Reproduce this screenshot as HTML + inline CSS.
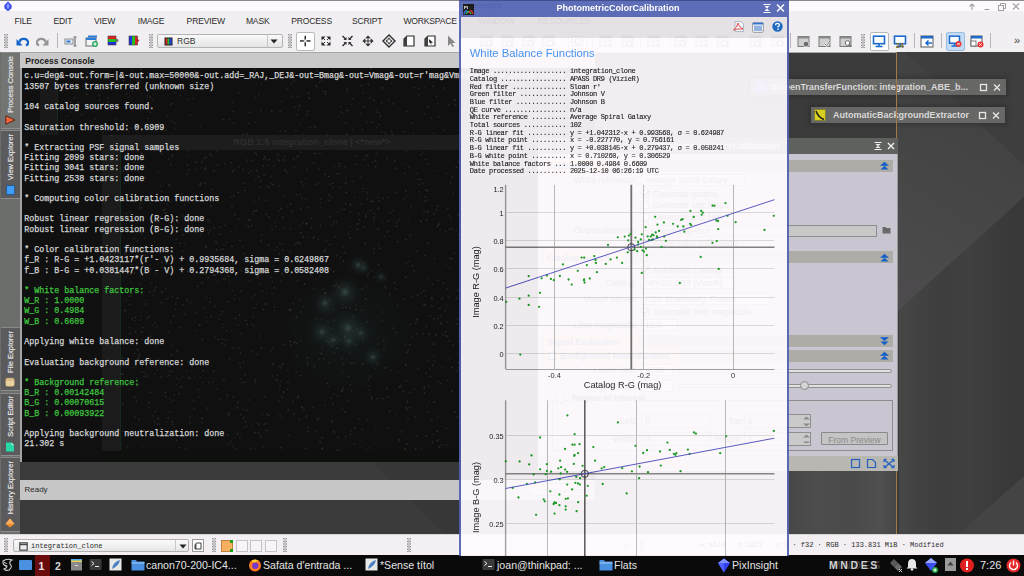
<!DOCTYPE html>
<html><head><meta charset="utf-8">
<style>
*{margin:0;padding:0;box-sizing:border-box}
html,body{width:1024px;height:576px;overflow:hidden;background:#3b3b3b;font-family:"Liberation Sans",sans-serif}
.a{position:absolute}
.mono{font-family:"Liberation Mono",monospace}
.nw{white-space:pre}
#titlebar{left:0;top:0;width:1024px;height:11px;background:#fdf9fd;border-top:1px solid #8a8a8a}
#menubar{left:0;top:11px;width:1024px;height:41px;background:#f1eff1}
.menu{font-size:8.6px;color:#2c2c2c;letter-spacing:-0.2px}
.grip{width:4px;background-image:radial-gradient(circle,#8a8a8a 0.6px,transparent 0.9px);background-size:2px 2px}
.sep{width:1px;background:#c4c2c4}
.tb{width:14px;height:14px}
</style></head><body>
<!-- main title bar -->
<div id="titlebar" class="a">
 <svg class="a" style="left:3px;top:0px" width="10" height="11" viewBox="0 0 10 11"><path d="M5 0.5 L8.8 4.5 L8.3 7.5 L5 10.5 L1.7 7.5 L1.2 4.5Z" fill="#3a4df0"/><path d="M5 2 L6.5 5 L5 9 L3.5 5Z" fill="#8fa0ff"/></svg>
 <div class="a nw" style="left:467px;top:0px;font-size:8px;color:#555">PixInsight</div>
 <svg class="a" style="left:966px;top:1px" width="58" height="9" viewBox="0 0 58 9">
  <path d="M6 8V2 M3.5 4.5L6 2L8.5 4.5" stroke="#a0a0a0" stroke-width="1.1" fill="none"/>
  <path d="M18.5 7.5H23.5" stroke="#a0a0a0" stroke-width="1.1"/>
  <rect x="32.5" y="3.5" width="5" height="5" stroke="#a0a0a0" fill="none" stroke-width="1"/><path d="M34.5 3.5V1.5H39.5V6.5H37.5" stroke="#a0a0a0" fill="none" stroke-width="1"/>
  <path d="M47 1.5L53 7.5M53 1.5L47 7.5" stroke="#a0a0a0" stroke-width="1.1"/>
 </svg>
</div>
<div id="menubar" class="a">
 <div class="a nw menu" style="left:14.4px;top:5.4px">FILE</div>
 <div class="a nw menu" style="left:53.5px;top:5.4px">EDIT</div>
 <div class="a nw menu" style="left:94px;top:5.4px">VIEW</div>
 <div class="a nw menu" style="left:137.7px;top:5.4px">IMAGE</div>
 <div class="a nw menu" style="left:186.6px;top:5.4px">PREVIEW</div>
 <div class="a nw menu" style="left:245.9px;top:5.4px">MASK</div>
 <div class="a nw menu" style="left:291.3px;top:5.4px">PROCESS</div>
 <div class="a nw menu" style="left:352px;top:5.4px">SCRIPT</div>
 <div class="a nw menu" style="left:403.4px;top:5.4px">WORKSPACE</div>
 <div class="a nw menu" style="left:478px;top:5.4px">WINDOW</div>
 <div class="a nw menu" style="left:538px;top:5.4px">RESOURCES</div>
</div>
<!-- toolbar -->
<svg class="a" style="left:4px;top:34px" width="4" height="14" viewBox="0 0 4 14"><circle cx="0.8" cy="0.8" r="0.75" fill="#7c7c7c"/><circle cx="3.2" cy="0.8" r="0.75" fill="#7c7c7c"/><circle cx="2" cy="2.1" r="0.8" fill="#a8a8a8"/><circle cx="0.8" cy="3.4" r="0.75" fill="#7c7c7c"/><circle cx="3.2" cy="3.4" r="0.75" fill="#7c7c7c"/><circle cx="2" cy="4.7" r="0.8" fill="#a8a8a8"/><circle cx="0.8" cy="6.0" r="0.75" fill="#7c7c7c"/><circle cx="3.2" cy="6.0" r="0.75" fill="#7c7c7c"/><circle cx="2" cy="7.3" r="0.8" fill="#a8a8a8"/><circle cx="0.8" cy="8.6" r="0.75" fill="#7c7c7c"/><circle cx="3.2" cy="8.6" r="0.75" fill="#7c7c7c"/><circle cx="2" cy="9.9" r="0.8" fill="#a8a8a8"/><circle cx="0.8" cy="11.2" r="0.75" fill="#7c7c7c"/><circle cx="3.2" cy="11.2" r="0.75" fill="#7c7c7c"/><circle cx="2" cy="12.5" r="0.8" fill="#a8a8a8"/><circle cx="0.8" cy="13.8" r="0.75" fill="#7c7c7c"/><circle cx="3.2" cy="13.8" r="0.75" fill="#7c7c7c"/></svg>
<svg class="a" style="left:15px;top:36px" width="14" height="11" viewBox="0 0 14 11"><path d="M4.5 6.5 A4.3 3.6 0 1 1 11 9.5" stroke="#1565c8" stroke-width="2.2" fill="none"/><path d="M1.5 3 L1.5 9.5 L7.5 9.5Z" fill="#1565c8"/></svg>
<svg class="a" style="left:36px;top:36px" width="14" height="11" viewBox="0 0 14 11"><path d="M9.5 6.5 A4.3 3.6 0 1 0 3 9.5" stroke="#959595" stroke-width="2.2" fill="none"/><path d="M12.5 3 L12.5 9.5 L6.5 9.5Z" fill="#959595"/></svg>
<div class="a sep" style="left:57px;top:33px;height:15px;background:#b8b6b8"></div>
<svg class="a" style="left:64px;top:36px" width="14" height="11" viewBox="0 0 14 11"><rect x="1" y="3" width="8" height="5" fill="#e8eef8" stroke="#8c8c8c"/><rect x="2.5" y="4.5" width="4" height="2" fill="#2a7ad8"/><path d="M9.5 1H12.5M11 1V10M9.5 10H12.5" stroke="#707070" stroke-width="1.2"/></svg>
<svg class="a" style="left:85px;top:35px" width="14" height="12" viewBox="0 0 14 12"><rect x="1" y="3" width="10" height="8" fill="#f4f4f4" stroke="#6e6e6e"/><rect x="3" y="0.5" width="9" height="2" fill="#2a7ad8"/><rect x="1" y="3" width="10" height="2" fill="#2a7ad8"/><circle cx="10" cy="9" r="3" fill="#2aa860"/><path d="M10 7.3V10.7M8.3 9H11.7" stroke="#fff" stroke-width="1.1"/></svg>
<svg class="a" style="left:107px;top:35px" width="13" height="11" viewBox="0 0 13 11"><rect x="1" y="1" width="8" height="3" fill="#e02020"/><rect x="1" y="4" width="8" height="3" fill="#20c020"/><rect x="1" y="7" width="8" height="3" fill="#2030e0"/><rect x="1" y="1" width="8" height="9" fill="none" stroke="#404040" stroke-width="0.6"/><path d="M9 3.5 L11.5 4.5 V6.5 L9 7.5Z" fill="#777"/></svg>
<svg class="a" style="left:128px;top:35px" width="13" height="11" viewBox="0 0 13 11"><rect x="1" y="1" width="3" height="9" fill="#2030e0"/><rect x="4" y="1" width="3" height="9" fill="#20c020"/><rect x="7" y="1" width="2.5" height="9" fill="#e02020"/><path d="M9 3.5 L11.5 5.5 L9 7.5Z" fill="#d03030"/><rect x="1" y="1" width="8.5" height="9" fill="none" stroke="#404040" stroke-width="0.6"/></svg>
<svg class="a" style="left:149px;top:34px" width="4" height="14" viewBox="0 0 4 14"><circle cx="0.8" cy="0.8" r="0.75" fill="#7c7c7c"/><circle cx="3.2" cy="0.8" r="0.75" fill="#7c7c7c"/><circle cx="2" cy="2.1" r="0.8" fill="#a8a8a8"/><circle cx="0.8" cy="3.4" r="0.75" fill="#7c7c7c"/><circle cx="3.2" cy="3.4" r="0.75" fill="#7c7c7c"/><circle cx="2" cy="4.7" r="0.8" fill="#a8a8a8"/><circle cx="0.8" cy="6.0" r="0.75" fill="#7c7c7c"/><circle cx="3.2" cy="6.0" r="0.75" fill="#7c7c7c"/><circle cx="2" cy="7.3" r="0.8" fill="#a8a8a8"/><circle cx="0.8" cy="8.6" r="0.75" fill="#7c7c7c"/><circle cx="3.2" cy="8.6" r="0.75" fill="#7c7c7c"/><circle cx="2" cy="9.9" r="0.8" fill="#a8a8a8"/><circle cx="0.8" cy="11.2" r="0.75" fill="#7c7c7c"/><circle cx="3.2" cy="11.2" r="0.75" fill="#7c7c7c"/><circle cx="2" cy="12.5" r="0.8" fill="#a8a8a8"/><circle cx="0.8" cy="13.8" r="0.75" fill="#7c7c7c"/><circle cx="3.2" cy="13.8" r="0.75" fill="#7c7c7c"/></svg>
<div class="a" style="left:157px;top:34px;width:126px;height:14px;background:linear-gradient(#fafafa,#e4e4e4);border:1px solid #b4b4b4;border-radius:2px">
 <svg class="a" style="left:6px;top:2px" width="9" height="9" viewBox="0 0 9 9"><rect x="0.5" y="0.5" width="8" height="8" fill="#222"/><rect x="1.5" y="1.5" width="2" height="6" fill="#e02020"/><rect x="3.5" y="1.5" width="2" height="6" fill="#20c020"/><rect x="5.5" y="1.5" width="2" height="6" fill="#2040f0"/></svg>
 <div class="a nw" style="left:19px;top:1px;font-size:8.5px;color:#333">RGB</div>
 <div class="a" style="left:109px;top:0;width:1px;height:12px;background:#c8c8c8"></div>
 <svg class="a" style="left:112px;top:4px" width="8" height="5" viewBox="0 0 8 5"><path d="M0.5 0.5H7.5L4 4.5Z" fill="#222"/></svg>
</div>
<svg class="a" style="left:288px;top:34px" width="4" height="14" viewBox="0 0 4 14"><circle cx="0.8" cy="0.8" r="0.75" fill="#7c7c7c"/><circle cx="3.2" cy="0.8" r="0.75" fill="#7c7c7c"/><circle cx="2" cy="2.1" r="0.8" fill="#a8a8a8"/><circle cx="0.8" cy="3.4" r="0.75" fill="#7c7c7c"/><circle cx="3.2" cy="3.4" r="0.75" fill="#7c7c7c"/><circle cx="2" cy="4.7" r="0.8" fill="#a8a8a8"/><circle cx="0.8" cy="6.0" r="0.75" fill="#7c7c7c"/><circle cx="3.2" cy="6.0" r="0.75" fill="#7c7c7c"/><circle cx="2" cy="7.3" r="0.8" fill="#a8a8a8"/><circle cx="0.8" cy="8.6" r="0.75" fill="#7c7c7c"/><circle cx="3.2" cy="8.6" r="0.75" fill="#7c7c7c"/><circle cx="2" cy="9.9" r="0.8" fill="#a8a8a8"/><circle cx="0.8" cy="11.2" r="0.75" fill="#7c7c7c"/><circle cx="3.2" cy="11.2" r="0.75" fill="#7c7c7c"/><circle cx="2" cy="12.5" r="0.8" fill="#a8a8a8"/><circle cx="0.8" cy="13.8" r="0.75" fill="#7c7c7c"/><circle cx="3.2" cy="13.8" r="0.75" fill="#7c7c7c"/></svg>
<div class="a" style="left:296px;top:32px;width:19px;height:19px;background:#fff;border:1px solid #b9b9b9;border-radius:2px"></div>
<svg class="a" style="left:298px;top:34px" width="160" height="15" viewBox="0 0 160 15">
 <g fill="#2e2e2e" stroke="none">
  <rect x="2" y="6.2" width="10.5" height="1.5"/><rect x="6.5" y="1.8" width="1.5" height="10.5"/><circle cx="7.25" cy="6.95" r="1.6" fill="#d8d8d8"/>
  <path d="M23.5 2.5H27.5L23.5 6.5Z M32.5 2.5H28.5L32.5 6.5Z M23.5 11.5H27.5L23.5 7.5Z M32.5 11.5H28.5L32.5 7.5Z"/>
  <path d="M24 3L27 6M32 3L29 6M24 11L27 8M32 11L29 8" stroke="#2e2e2e" stroke-width="1"/>
  <path d="M44.5 2L48 5.5M54.5 2L51 5.5M44.5 12L48 8.5M54.5 12L51 8.5" stroke="#2e2e2e" stroke-width="1.4"/>
  <path d="M48.5 6H45.5L48.5 3Z M50.5 6H53.5L50.5 3Z M48.5 8H45.5L48.5 11Z M50.5 8H53.5L50.5 11Z"/>
  <path d="M70 1.5L67.3 4.3H72.7Z M70 12.5L67.3 9.7H72.7Z M64.5 7L67.3 4.3V9.7Z M75.5 7L72.7 4.3V9.7Z"/><path d="M70 4V10M67 7H73" stroke="#2e2e2e" stroke-width="0.9"/>
  <path d="M91 1L97 7L91 13L85 7Z" fill="none" stroke="#2e2e2e" stroke-width="1.4"/><path d="M91 3.5L89.3 5.5H92.7Z M91 10.5L89.3 8.5H92.7Z M87.5 7L89.5 5.3V8.7Z M94.5 7L92.5 5.3V8.7Z"/>
 </g>
 <path d="M106 5L109 2H116V12H106Z" fill="#fff" stroke="#303030" stroke-width="1.2"/><path d="M106 5V12H109V2" fill="#404040"/>
 <path d="M127 5L130 2H137V12H127Z" fill="#fff" stroke="#303030" stroke-width="1.2"/><path d="M127 5V12H130V2" fill="#404040"/><path d="M131 5L135 8.5L133 9L134 11L131 8Z" fill="#303030"/>
 <path d="M150 1.5V12L152.5 9.5L154.5 13L156 12.3L154 9H157.5Z" fill="#888"/>
</svg>
<!-- ghost toolbar under dialog -->
<svg class="a" style="left:480px;top:35px" width="13" height="12" viewBox="0 0 13 12"><rect x="1" y="1" width="11" height="10" fill="#d8d8d8" stroke="#707070"/><rect x="1" y="1" width="11" height="2" fill="#707070"/><circle cx="8.5" cy="8" r="2.5" fill="#fff" stroke="#606060"/></svg>
<svg class="a" style="left:501px;top:35px" width="13" height="12" viewBox="0 0 13 12"><rect x="1" y="1" width="11" height="10" fill="#d8d8d8" stroke="#707070"/><rect x="1" y="1" width="11" height="2" fill="#707070"/><circle cx="8.5" cy="8" r="2.5" fill="#fff" stroke="#606060"/></svg>
<svg class="a" style="left:522px;top:35px" width="13" height="12" viewBox="0 0 13 12"><rect x="1" y="1" width="11" height="10" fill="#d8d8d8" stroke="#707070"/><rect x="1" y="1" width="11" height="2" fill="#707070"/><circle cx="8.5" cy="8" r="2.5" fill="#fff" stroke="#606060"/></svg>
<svg class="a" style="left:542px;top:35px" width="13" height="12" viewBox="0 0 13 12"><rect x="1" y="1" width="11" height="10" fill="#d8d8d8" stroke="#707070"/><rect x="1" y="1" width="11" height="2" fill="#707070"/><circle cx="8.5" cy="8" r="2.5" fill="#fff" stroke="#606060"/></svg>
<svg class="a" style="left:599px;top:35px" width="13" height="12" viewBox="0 0 13 12"><rect x="1" y="1" width="11" height="10" fill="#d8d8d8" stroke="#707070"/><rect x="1" y="1" width="11" height="2" fill="#707070"/><circle cx="8.5" cy="8" r="2.5" fill="#fff" stroke="#606060"/></svg>
<svg class="a" style="left:621px;top:35px" width="13" height="12" viewBox="0 0 13 12"><rect x="1" y="1" width="11" height="10" fill="#d8d8d8" stroke="#707070"/><rect x="1" y="1" width="11" height="2" fill="#707070"/><circle cx="8.5" cy="8" r="2.5" fill="#fff" stroke="#606060"/></svg>
<svg class="a" style="left:647px;top:35px" width="13" height="12" viewBox="0 0 13 12"><rect x="1" y="1" width="11" height="10" fill="#d8d8d8" stroke="#707070"/><rect x="1" y="1" width="11" height="2" fill="#707070"/><circle cx="8.5" cy="8" r="2.5" fill="#fff" stroke="#606060"/></svg>
<svg class="a" style="left:674px;top:35px" width="13" height="12" viewBox="0 0 13 12"><rect x="1" y="1" width="11" height="10" fill="#d8d8d8" stroke="#707070"/><rect x="1" y="1" width="11" height="2" fill="#707070"/><circle cx="8.5" cy="8" r="2.5" fill="#fff" stroke="#606060"/></svg>
<svg class="a" style="left:695px;top:35px" width="13" height="12" viewBox="0 0 13 12"><rect x="1" y="1" width="11" height="10" fill="#d8d8d8" stroke="#707070"/><rect x="1" y="1" width="11" height="2" fill="#707070"/><circle cx="8.5" cy="8" r="2.5" fill="#fff" stroke="#606060"/></svg>
<svg class="a" style="left:716px;top:35px" width="13" height="12" viewBox="0 0 13 12"><rect x="1" y="1" width="11" height="10" fill="#d8d8d8" stroke="#707070"/><rect x="1" y="1" width="11" height="2" fill="#707070"/><circle cx="8.5" cy="8" r="2.5" fill="#fff" stroke="#606060"/></svg>
<svg class="a" style="left:749px;top:35px" width="13" height="12" viewBox="0 0 13 12"><rect x="1" y="1" width="11" height="10" fill="#d8d8d8" stroke="#707070"/><rect x="1" y="1" width="11" height="2" fill="#707070"/><circle cx="8.5" cy="8" r="2.5" fill="#fff" stroke="#606060"/></svg>
<svg class="a" style="left:771px;top:35px" width="13" height="12" viewBox="0 0 13 12"><rect x="1" y="1" width="11" height="10" fill="#d8d8d8" stroke="#707070"/><rect x="1" y="1" width="11" height="2" fill="#707070"/><circle cx="8.5" cy="8" r="2.5" fill="#fff" stroke="#606060"/></svg>
<div class="a" style="left:568px;top:32px;width:19px;height:19px;background:#fff;border:1px solid #b9b9b9;border-radius:2px"></div>
<svg class="a" style="left:571px;top:35px" width="13" height="12" viewBox="0 0 13 12"><rect x="1" y="1" width="11" height="10" fill="#fff" stroke="#707070"/><circle cx="7" cy="6.5" r="2.8" fill="none" stroke="#1a6ad0" stroke-width="1.3"/></svg>
<div class="a sep" style="left:592px;top:33px;height:15px;background:#b8b6b8"></div>
<div class="a sep" style="left:640px;top:33px;height:15px;background:#b8b6b8"></div>
<div class="a sep" style="left:670px;top:33px;height:15px;background:#b8b6b8"></div>
<!-- right toolbar -->
<div class="a sep" style="left:790px;top:33px;height:15px;background:#b8b6b8"></div>
<svg class="a" style="left:797px;top:35px" width="60" height="13" viewBox="0 0 60 13">
 <g><rect x="1" y="1.5" width="11" height="10" fill="#d0d0d0" stroke="#7a7a7a" stroke-width="1"/><rect x="1" y="1.5" width="11" height="2" fill="#8a8a8a"/><circle cx="9" cy="9" r="2.8" fill="#6a6a6a" stroke="#fff" stroke-width="0.6"/></g>
 <g transform="translate(21,0)"><rect x="1" y="1.5" width="11" height="10" fill="#d0d0d0" stroke="#7a7a7a" stroke-width="1"/><rect x="1" y="1.5" width="11" height="2" fill="#8a8a8a"/><path d="M6.5 8.5L8.5 10.5L12 6" stroke="#fff" stroke-width="2" fill="none"/><path d="M6.5 8.5L8.5 10.5L12 6" stroke="#6a6a6a" stroke-width="1" fill="none"/></g>
 <g transform="translate(42,0)"><rect x="1" y="1.5" width="11" height="10" fill="#d0d0d0" stroke="#7a7a7a" stroke-width="1"/><rect x="1" y="1.5" width="11" height="2" fill="#8a8a8a"/><circle cx="8.5" cy="8" r="2.3" fill="#fff" stroke="#6a6a6a" stroke-width="1"/><path d="M10 9.5L12 11.5" stroke="#6a6a6a" stroke-width="1.2"/></g>
</svg>
<svg class="a" style="left:861px;top:34px" width="4" height="14" viewBox="0 0 4 14"><circle cx="0.8" cy="0.8" r="0.75" fill="#7c7c7c"/><circle cx="3.2" cy="0.8" r="0.75" fill="#7c7c7c"/><circle cx="2" cy="2.1" r="0.8" fill="#a8a8a8"/><circle cx="0.8" cy="3.4" r="0.75" fill="#7c7c7c"/><circle cx="3.2" cy="3.4" r="0.75" fill="#7c7c7c"/><circle cx="2" cy="4.7" r="0.8" fill="#a8a8a8"/><circle cx="0.8" cy="6.0" r="0.75" fill="#7c7c7c"/><circle cx="3.2" cy="6.0" r="0.75" fill="#7c7c7c"/><circle cx="2" cy="7.3" r="0.8" fill="#a8a8a8"/><circle cx="0.8" cy="8.6" r="0.75" fill="#7c7c7c"/><circle cx="3.2" cy="8.6" r="0.75" fill="#7c7c7c"/><circle cx="2" cy="9.9" r="0.8" fill="#a8a8a8"/><circle cx="0.8" cy="11.2" r="0.75" fill="#7c7c7c"/><circle cx="3.2" cy="11.2" r="0.75" fill="#7c7c7c"/><circle cx="2" cy="12.5" r="0.8" fill="#a8a8a8"/><circle cx="0.8" cy="13.8" r="0.75" fill="#7c7c7c"/><circle cx="3.2" cy="13.8" r="0.75" fill="#7c7c7c"/></svg>
<div class="a" style="left:870px;top:32px;width:19px;height:19px;background:#fff;border:1px solid #b9b9b9;border-radius:2px"></div>
<svg class="a" style="left:872px;top:35px" width="14" height="13" viewBox="0 0 14 13"><rect x="1.5" y="1.2" width="11" height="7.5" fill="#fff" stroke="#1a6ad0" stroke-width="1.6"/><path d="M7 9V11M3.5 11.5H10.5" stroke="#1a6ad0" stroke-width="1.6"/></svg>
<svg class="a" style="left:893px;top:35px" width="14" height="13" viewBox="0 0 14 13"><rect x="1.5" y="1.2" width="11" height="7.5" fill="#fff" stroke="#1a6ad0" stroke-width="1.6"/><path d="M7 9V11M3.5 11.5H10.5" stroke="#1a6ad0" stroke-width="1.6"/><text x="3" y="12.5" font-size="7" font-weight="bold" fill="#8a6a10" font-family="Liberation Sans">24</text></svg>
<div class="a sep" style="left:914px;top:33px;height:15px;background:#b8b6b8"></div>
<svg class="a" style="left:920px;top:35px" width="14" height="13" viewBox="0 0 14 13"><rect x="1" y="1" width="12" height="11" fill="#fff" stroke="#5a5a5a" stroke-width="1"/><rect x="1" y="1" width="12" height="2.5" fill="#1a6ad0"/><path d="M12 8H6M8.5 5.5L6 8L8.5 10.5" stroke="#1a6ad0" stroke-width="1.5" fill="none"/></svg>
<div class="a sep" style="left:941px;top:33px;height:15px;background:#b8b6b8"></div>
<div class="a" style="left:946px;top:32px;width:18.5px;height:19px;background:#c6dcf2;border:1px solid #98bce0;border-radius:2px"></div>
<svg class="a" style="left:948px;top:35px" width="14" height="13" viewBox="0 0 14 13"><rect x="1.5" y="1.2" width="10" height="7" fill="#fff" stroke="#1a6ad0" stroke-width="1.5"/><path d="M6.5 8.5V10.5M3.5 11H9" stroke="#1a6ad0" stroke-width="1.5"/><circle cx="10.5" cy="9" r="3" fill="#e83030"/><path d="M9.3 7.8L11.7 10.2M11.7 7.8L9.3 10.2" stroke="#fff" stroke-width="0.9"/></svg>
<svg class="a" style="left:970px;top:35px" width="14" height="13" viewBox="0 0 14 13"><rect x="1" y="1" width="11" height="10" fill="#fff" stroke="#5a5a5a" stroke-width="1"/><rect x="1" y="1" width="11" height="2.5" fill="#1a6ad0"/><rect x="1" y="6" width="5" height="5" fill="#fff" stroke="#5a5a5a" stroke-width="0.8"/><circle cx="10.5" cy="9.5" r="3" fill="#e83030"/><path d="M9.3 8.3L11.7 10.7M11.7 8.3L9.3 10.7" stroke="#fff" stroke-width="0.9"/></svg>
<div class="a sep" style="left:990px;top:33px;height:15px;background:#b8b6b8"></div>
<div class="a nw" style="left:1014px;top:34px;font-size:11px;color:#444">»</div>
<!-- toolbar bottom line -->
<div class="a" style="left:0;top:51.5px;width:1024px;height:1px;background:#a9a9a9"></div>
<!-- workspace shading -->
<svg class="a" style="left:0;top:52px" width="1024" height="482" viewBox="0 52 1024 482">
 <defs><linearGradient id="wg" x1="0" y1="0" x2="1" y2="1"><stop offset="0" stop-color="#3c3c3c"/><stop offset="1" stop-color="#4c4a4c"/></linearGradient></defs>
 <defs><linearGradient id="wg2" x1="0.3" y1="0" x2="0" y2="1"><stop offset="0" stop-color="#414141"/><stop offset="1" stop-color="#4e4c4e"/></linearGradient></defs><polygon points="897,52 905,52 1024,165 1024,197 897,312" fill="url(#wg2)"/>
 <polygon points="905,52 1024,52 1024,165" fill="#3e3e3e"/>
 <defs><linearGradient id="hg" x1="0" y1="0" x2="1" y2="0"><stop offset="0" stop-color="#474747"/><stop offset="0.15" stop-color="#424242"/><stop offset="0.35" stop-color="#3e3e3e"/><stop offset="0.55" stop-color="#404040"/><stop offset="0.75" stop-color="#3b3b3b"/><stop offset="1" stop-color="#383838"/></linearGradient></defs><polygon points="899,310 1024,197 1024,534 899,534" fill="url(#hg)"/><polygon points="972,522 1024,476 1024,534 960,534" fill="#444444"/>
 <polygon points="373,462 443,532 460,534 460,462" fill="#373737"/>
</svg>
<!-- left dock -->
<div class="a" style="left:0;top:52px;width:20px;height:482px;background:#6c6e6c"></div>
<div class="a" style="left:1px;top:52px;width:18.5px;height:77px;background:#737573;border-top:1px solid #888a88;border-bottom:1px solid #8e8e8e"></div>
<div class="a nw" style="left:10.3px;top:55.5px;font-size:7.5px;color:#e8e8e8;-webkit-text-stroke:0.15px #e8e8e8;transform-origin:0 0;transform:rotate(-90deg) translate(-100%,-50%);"><span style="display:inline-block">Process Console</span></div>
<svg class="a" style="left:4.5px;top:115.0px" width="11" height="10" viewBox="0 0 11 10"><path d="M0.8 0.8L10 5L0.8 9.2Z" fill="#f2643a" stroke="#401810" stroke-width="0.8"/></svg>
<div class="a" style="left:1px;top:130px;width:18.5px;height:69px;background:#5b5a5c;border-top:1px solid #888a88;border-bottom:1px solid #8e8e8e"></div>
<div class="a nw" style="left:10.3px;top:133.5px;font-size:7.5px;color:#e8e8e8;-webkit-text-stroke:0.15px #e8e8e8;transform-origin:0 0;transform:rotate(-90deg) translate(-100%,-50%);"><span style="display:inline-block">View Explorer</span></div>
<div class="a" style="left:5.5px;top:184.5px;width:9px;height:10px;background:#3f9ff8;border:0.5px solid #2a5a90"></div>
<div class="a" style="left:1px;top:327px;width:18.5px;height:64px;background:#5b5a5c;border-top:1px solid #888a88;border-bottom:1px solid #8e8e8e"></div>
<div class="a nw" style="left:10.3px;top:330.5px;font-size:7.5px;color:#e8e8e8;-webkit-text-stroke:0.15px #e8e8e8;transform-origin:0 0;transform:rotate(-90deg) translate(-100%,-50%);"><span style="display:inline-block">File Explorer</span></div>
<svg class="a" style="left:5px;top:376.5px" width="10" height="10" viewBox="0 0 10 10"><rect x="0.5" y="1" width="9" height="8.5" rx="2" fill="#ead2a0" stroke="#a08050" stroke-width="0.6"/><path d="M0.8 3H9.2" stroke="#a08050" stroke-width="0.5"/></svg>
<div class="a" style="left:1px;top:392.5px;width:18.5px;height:63.5px;background:#5b5a5c;border-top:1px solid #888a88;border-bottom:1px solid #8e8e8e"></div>
<div class="a nw" style="left:10.3px;top:396.0px;font-size:7.5px;color:#e8e8e8;-webkit-text-stroke:0.15px #e8e8e8;transform-origin:0 0;transform:rotate(-90deg) translate(-100%,-50%);"><span style="display:inline-block">Script Editor</span></div>
<svg class="a" style="left:5px;top:441.5px" width="10" height="10" viewBox="0 0 10 10"><path d="M1 0.5H6.5L9 3V9.5H1Z" fill="#28d8a8"/><path d="M6.5 0.5V3H9" fill="#b8f0e0"/></svg>
<div class="a" style="left:1px;top:457px;width:18.5px;height:75px;background:#5b5a5c;border-top:1px solid #888a88;border-bottom:1px solid #8e8e8e"></div>
<div class="a nw" style="left:10.3px;top:460.5px;font-size:7.5px;color:#e8e8e8;-webkit-text-stroke:0.15px #e8e8e8;transform-origin:0 0;transform:rotate(-90deg) translate(-100%,-50%);"><span style="display:inline-block">History Explorer</span></div>
<svg class="a" style="left:5px;top:517.5px" width="10" height="10" viewBox="0 0 10 10"><path d="M5 0.5L9.5 6L5 9.5L0.5 6Z" fill="#f08a28"/><path d="M5 0.5L9.5 6H0.5Z" fill="#fab060"/></svg>
<!-- console panel -->
<div class="a" style="left:20px;top:52px;width:440px;height:16px;background:#c9c9c9;border-top:1px solid #a8a8a8"><div class="a nw" style="left:5.2px;top:3px;font-size:8.56px;font-weight:bold;color:#1e1e1e">Process Console</div></div>
<div class="a" style="left:20px;top:68px;width:2px;height:394px;background:#a4a4a4"></div>
<div id="cons" class="a" style="left:22px;top:68px;width:438px;height:394px;background:#101010;overflow:hidden">
<div class="a" style="left:18px;top:0;width:17px;height:67px;background:#191919"></div>
<div class="a" style="left:35px;top:0;width:1px;height:67px;background:#15281a"></div>
<div class="a" style="left:80px;top:67px;width:18px;height:327px;background:#1b1b1b"></div>
<div class="a" style="left:98px;top:82px;width:1px;height:300px;background:#152a1a"></div>
<div class="a" style="left:80px;top:383px;width:358px;height:11px;background:#0e100e"></div>
<div class="a" style="left:80px;top:67px;width:358px;height:14.5px;background:#1d1d1d"><div class="a nw" style="left:131.5px;top:2px;font-size:9.1px;font-weight:bold;color:#2e2e2e">RGB 1:6 integration_clone | &lt;*new*&gt;</div></div>
<div class="a" style="left:324px;top:185px;width:24px;height:24px;border-radius:50%;background:radial-gradient(circle,rgba(140,180,180,0.30000000000000004) 0,rgba(80,120,120,0.16000000000000003) 18%,rgba(50,80,80,0.06) 45%,rgba(40,70,70,0) 70%)"></div>
<div class="a" style="left:333px;top:191px;width:18px;height:18px;border-radius:50%;background:radial-gradient(circle,rgba(140,180,180,0.22499999999999998) 0,rgba(80,120,120,0.12) 18%,rgba(50,80,80,0.045) 45%,rgba(40,70,70,0) 70%)"></div>
<div class="a" style="left:305px;top:206px;width:36px;height:36px;border-radius:50%;background:radial-gradient(circle,rgba(140,180,180,0.3375) 0,rgba(80,120,120,0.18000000000000002) 18%,rgba(50,80,80,0.0675) 45%,rgba(40,70,70,0) 70%)"></div>
<div class="a" style="left:288px;top:220px;width:30px;height:30px;border-radius:50%;background:radial-gradient(circle,rgba(140,180,180,0.30000000000000004) 0,rgba(80,120,120,0.16000000000000003) 18%,rgba(50,80,80,0.06) 45%,rgba(40,70,70,0) 70%)"></div>
<div class="a" style="left:307.5px;top:242px;width:36px;height:36px;border-radius:50%;background:radial-gradient(circle,rgba(140,180,180,0.3375) 0,rgba(80,120,120,0.18000000000000002) 18%,rgba(50,80,80,0.0675) 45%,rgba(40,70,70,0) 70%)"></div>
<div class="a" style="left:284.5px;top:249px;width:30px;height:30px;border-radius:50%;background:radial-gradient(circle,rgba(140,180,180,0.30000000000000004) 0,rgba(80,120,120,0.16000000000000003) 18%,rgba(50,80,80,0.06) 45%,rgba(40,70,70,0) 70%)"></div>
<div class="a" style="left:327px;top:253px;width:24px;height:24px;border-radius:50%;background:radial-gradient(circle,rgba(140,180,180,0.26249999999999996) 0,rgba(80,120,120,0.13999999999999999) 18%,rgba(50,80,80,0.0525) 45%,rgba(40,70,70,0) 70%)"></div>
<div class="a" style="left:299px;top:260px;width:24px;height:24px;border-radius:50%;background:radial-gradient(circle,rgba(140,180,180,0.26249999999999996) 0,rgba(80,120,120,0.13999999999999999) 18%,rgba(50,80,80,0.0525) 45%,rgba(40,70,70,0) 70%)"></div>
<div class="a" style="left:314.5px;top:261px;width:24px;height:24px;border-radius:50%;background:radial-gradient(circle,rgba(140,180,180,0.26249999999999996) 0,rgba(80,120,120,0.13999999999999999) 18%,rgba(50,80,80,0.0525) 45%,rgba(40,70,70,0) 70%)"></div>
<div class="a" style="left:338.5px;top:277px;width:24px;height:24px;border-radius:50%;background:radial-gradient(circle,rgba(140,180,180,0.30000000000000004) 0,rgba(80,120,120,0.16000000000000003) 18%,rgba(50,80,80,0.06) 45%,rgba(40,70,70,0) 70%)"></div>
<div class="a" style="left:350px;top:200px;width:18px;height:18px;border-radius:50%;background:radial-gradient(circle,rgba(140,180,180,0.22499999999999998) 0,rgba(80,120,120,0.12) 18%,rgba(50,80,80,0.045) 45%,rgba(40,70,70,0) 70%)"></div>
<div class="a" style="left:255px;top:205px;width:140px;height:120px;border-radius:50%;background:radial-gradient(ellipse,rgba(40,70,70,0.16),rgba(40,70,70,0) 70%)"></div>
<div class="a" style="left:0;top:0;width:1px;height:1px;box-shadow:149.3px 277.3px 1.2px 0.1px #403838,130.0px 256.8px 1.2px 0.1px #343434,210.3px 4.7px 1.2px 0.1px #403838,118.1px 251.6px 1.2px 0.1px #343434,296.2px 100.6px 1.2px 0.1px #3c3c3c,124.9px 37.3px 1.2px 0.1px #463c3c,147.0px 117.3px 1.2px 0.1px #4a4040,329.9px 112.9px 1.2px 0.1px #343434,284.2px 100.8px 1.2px 0.1px #3a3434,266.8px 241.5px 1.2px 0.1px #524646,412.0px 190.5px 1.2px 0.1px #343434,335.7px 155.2px 1.2px 0.1px #4a4040,395.5px 300.8px 1.2px 0.1px #4a4040,122.9px 235.6px 1.2px 0.1px #463c3c,149.7px 228.7px 1.2px 0.1px #3a3434,124.4px 249.4px 1.2px 0.1px #524646,217.1px 231.0px 1.2px 0.1px #383a38,73.6px 18.1px 1.2px 0.1px #403838,318.0px 43.4px 1.2px 0.1px #383a38,229.2px 282.6px 1.2px 0.1px #3a3434,218.9px 265.3px 1.2px 0.1px #383a38,344.8px 8.7px 1.2px 0.1px #343434,409.7px 231.0px 1.2px 0.1px #463c3c,284.8px 347.0px 1.2px 0.1px #3c3c3c,192.7px 206.6px 1.2px 0.1px #524646,227.4px 151.2px 1.2px 0.1px #403838,176.9px 152.0px 1.2px 0.1px #383a38,160.0px 166.6px 1.2px 0.1px #463c3c,223.5px 251.9px 1.2px 0.1px #463c3c,273.3px 267.3px 1.2px 0.1px #3a3434,394.1px 367.6px 1.2px 0.1px #3c3c3c,232.0px 226.5px 1.2px 0.1px #3c3c3c,63.1px 14.0px 1.2px 0.1px #463c3c,277.5px 6.9px 1.2px 0.1px #463c3c,420.6px 266.1px 1.2px 0.1px #403838,306.8px 126.6px 1.2px 0.1px #4a4040,302.8px 224.2px 1.2px 0.1px #403838,435.7px 221.8px 1.2px 0.1px #383a38,147.0px 306.9px 1.2px 0.1px #4a4040,333.3px 236.9px 1.2px 0.1px #343434,277.6px 126.0px 1.2px 0.1px #3a3434,199.4px 274.9px 1.2px 0.1px #403838,186.8px 192.0px 1.2px 0.1px #463c3c,173.7px 244.5px 1.2px 0.1px #524646,306.5px 318.5px 1.2px 0.1px #343434,376.2px 304.0px 1.2px 0.1px #343434,265.5px 301.3px 1.2px 0.1px #3a3434,258.6px 140.1px 1.2px 0.1px #524646,416.6px 378.4px 1.2px 0.1px #524646,77.1px 31.5px 1.2px 0.1px #524646,310.2px 352.1px 1.2px 0.1px #3a3434,320.0px 321.9px 1.2px 0.1px #403838,138.8px 198.6px 1.2px 0.1px #343434,158.7px 318.7px 1.2px 0.1px #524646,416.4px 48.4px 1.2px 0.1px #383a38,419.9px 299.4px 1.2px 0.1px #463c3c,107.4px 259.2px 1.2px 0.1px #383a38,147.7px 330.0px 1.2px 0.1px #383a38,217.1px 246.6px 1.2px 0.1px #463c3c,357.3px 48.7px 1.2px 0.1px #403838,415.4px 212.1px 1.2px 0.1px #343434,169.8px 157.6px 1.2px 0.1px #4a4040,357.7px 179.8px 1.2px 0.1px #3c3c3c,118.7px 304.0px 1.2px 0.1px #383a38,375.1px 237.0px 1.2px 0.1px #463c3c,276.0px 87.6px 1.2px 0.1px #383a38,304.9px 314.8px 1.2px 0.1px #463c3c,259.0px 299.6px 1.2px 0.1px #3a3434,274.2px 248.6px 1.2px 0.1px #403838,117.3px 139.4px 1.2px 0.1px #3a3434,270.6px 250.5px 1.2px 0.1px #403838,306.3px 233.7px 1.2px 0.1px #343434,251.8px 242.0px 1.2px 0.1px #383a38,182.2px 239.0px 1.2px 0.1px #4a4040,401.5px 142.8px 1.2px 0.1px #383a38,84.9px 29.6px 1.2px 0.1px #403838,243.6px 145.8px 1.2px 0.1px #4a4040,403.0px 128.3px 1.2px 0.1px #524646,390.9px 64.8px 1.2px 0.1px #343434,130.0px 347.5px 1.2px 0.1px #463c3c,381.0px 130.4px 1.2px 0.1px #3c3c3c,235.3px 208.4px 1.2px 0.1px #524646,343.5px 87.8px 1.2px 0.1px #383a38,104.1px 181.4px 1.2px 0.1px #4a4040,119.9px 377.5px 1.2px 0.1px #343434,133.6px 161.7px 1.2px 0.1px #3a3434,159.7px 308.7px 1.2px 0.1px #3c3c3c,327.8px 365.8px 1.2px 0.1px #3c3c3c,405.5px 38.2px 1.2px 0.1px #524646,59.1px 46.1px 1.2px 0.1px #3c3c3c,189.4px 87.0px 1.2px 0.1px #403838,126.5px 338.9px 1.2px 0.1px #403838,139.4px 85.5px 1.2px 0.1px #3c3c3c,189.1px 120.8px 1.2px 0.1px #343434,427.5px 160.6px 1.2px 0.1px #463c3c,204.1px 173.5px 1.2px 0.1px #343434,268.0px 135.4px 1.2px 0.1px #524646,436.1px 93.1px 1.2px 0.1px #3a3434,285.4px 138.8px 1.2px 0.1px #383a38,250.0px 279.5px 1.2px 0.1px #3c3c3c,283.6px 348.6px 1.2px 0.1px #4a4040,432.0px 184.8px 1.2px 0.1px #463c3c,216.2px 98.3px 1.2px 0.1px #463c3c,287.4px 59.0px 1.2px 0.1px #3c3c3c,126.7px 334.4px 1.2px 0.1px #4a4040,333.5px 95.6px 1.2px 0.1px #463c3c,249.6px 161.0px 1.2px 0.1px #524646,284.0px 155.3px 1.2px 0.1px #4a4040,160.2px 182.6px 1.2px 0.1px #403838,268.9px 142.3px 1.2px 0.1px #3a3434,364.5px 9.6px 1.2px 0.1px #3a3434,199.9px 270.9px 1.2px 0.1px #403838,277.9px 307.2px 1.2px 0.1px #3c3c3c,343.0px 230.3px 1.2px 0.1px #4a4040,316.7px 95.1px 1.2px 0.1px #3c3c3c,374.2px 123.8px 1.2px 0.1px #3a3434,296.6px 349.8px 1.2px 0.1px #343434,52.8px 42.7px 1.2px 0.1px #403838,251.5px 97.2px 1.2px 0.1px #3a3434,329.4px 228.8px 1.2px 0.1px #3a3434,121.8px 361.8px 1.2px 0.1px #403838,120.5px 303.0px 1.2px 0.1px #4a4040,385.7px 152.4px 1.2px 0.1px #343434,319.0px 220.1px 1.2px 0.1px #3c3c3c,402.0px 19.3px 1.2px 0.1px #3a3434,316.5px 105.2px 1.2px 0.1px #463c3c,319.5px 289.9px 1.2px 0.1px #463c3c,60.4px 18.0px 1.2px 0.1px #403838,327.7px 169.3px 1.2px 0.1px #4a4040,256.6px 117.6px 1.2px 0.1px #343434,127.2px 223.9px 1.2px 0.1px #4a4040,376.8px 372.4px 1.2px 0.1px #383a38,229.5px 357.0px 1.2px 0.1px #343434,72.3px 50.1px 1.2px 0.1px #4a4040,143.1px 328.1px 1.2px 0.1px #4a4040,337.1px 151.4px 1.2px 0.1px #383a38,152.1px 367.0px 1.2px 0.1px #383a38,345.2px 206.9px 1.2px 0.1px #3c3c3c,383.7px 82.5px 1.2px 0.1px #524646,138.8px 359.9px 1.2px 0.1px #3a3434,196.5px 193.7px 1.2px 0.1px #3c3c3c,393.8px 104.9px 1.2px 0.1px #3c3c3c,388.4px 166.2px 1.2px 0.1px #3a3434,195.1px 362.7px 1.2px 0.1px #343434,246.3px 176.7px 1.2px 0.1px #524646,243.4px 90.7px 1.2px 0.1px #3c3c3c,417.8px 246.8px 1.2px 0.1px #403838,330.4px 30.2px 1.2px 0.1px #463c3c,195.3px 96.7px 1.2px 0.1px #463c3c,239.1px 166.5px 1.2px 0.1px #4a4040,429.9px 160.1px 1.2px 0.1px #343434,287.5px 200.3px 1.2px 0.1px #463c3c,123.6px 232.2px 1.2px 0.1px #383a38,252.0px 181.9px 1.2px 0.1px #383a38,284.2px 155.2px 1.2px 0.1px #463c3c,129.0px 153.7px 1.2px 0.1px #4a4040,166.7px 88.0px 1.2px 0.1px #3c3c3c,351.6px 145.0px 1.2px 0.1px #4a4040,119.1px 165.3px 1.2px 0.1px #524646,238.4px 42.2px 1.2px 0.1px #343434,396.5px 25.8px 1.2px 0.1px #383a38,204.1px 326.3px 1.2px 0.1px #3a3434,206.9px 51.2px 1.2px 0.1px #383a38,264.5px 103.9px 1.2px 0.1px #383a38,182.5px 114.7px 1.2px 0.1px #463c3c,428.4px 114.7px 1.2px 0.1px #383a38,348.3px 0.1px 1.2px 0.1px #463c3c,410.8px 275.7px 1.2px 0.1px #4a4040,311.0px 240.5px 1.2px 0.1px #3c3c3c,136.1px 103.1px 1.2px 0.1px #343434,174.0px 262.3px 1.2px 0.1px #3a3434,436.8px 165.6px 1.2px 0.1px #524646,398.5px 224.6px 1.2px 0.1px #343434,108.0px 205.5px 1.2px 0.1px #4a4040,114.0px 59.3px 1.2px 0.1px #3c3c3c,127.6px 28.4px 1.2px 0.1px #524646,109.6px 183.4px 1.2px 0.1px #3c3c3c,232.8px 84.0px 1.2px 0.1px #4a4040,269.7px 143.6px 1.2px 0.1px #343434,376.8px 151.2px 1.2px 0.1px #343434,400.4px 114.7px 1.2px 0.1px #383a38,402.8px 227.5px 1.2px 0.1px #3a3434,147.8px 200.0px 1.2px 0.1px #343434,275.6px 27.8px 1.2px 0.1px #3a3434,250.9px 295.6px 1.2px 0.1px #524646,437.2px 361.5px 1.2px 0.1px #524646,319.8px 239.4px 1.2px 0.1px #383a38,303.1px 25.4px 1.2px 0.1px #524646,248.4px 114.7px 1.2px 0.1px #403838,217.5px 368.7px 1.2px 0.1px #403838,356.0px 196.0px 1.2px 0.1px #4a4040,245.0px 96.8px 1.2px 0.1px #383a38,282.1px 215.9px 1.2px 0.1px #524646,403.0px 91.1px 1.2px 0.1px #3c3c3c,310.6px 203.4px 1.2px 0.1px #3c3c3c,61.2px 61.6px 1.2px 0.1px #4a4040,119.4px 263.7px 1.2px 0.1px #524646,423.6px 267.1px 1.2px 0.1px #4a4040,332.5px 359.3px 1.2px 0.1px #4a4040,339.8px 61.4px 1.2px 0.1px #403838,130.0px 31.8px 1.2px 0.1px #383a38,229.4px 157.3px 1.2px 0.1px #3c3c3c,143.1px 231.0px 1.2px 0.1px #3a3434,349.1px 328.8px 1.2px 0.1px #463c3c,209.5px 177.9px 1.2px 0.1px #524646,300.5px 235.6px 1.2px 0.1px #3c3c3c,182.1px 101.4px 1.2px 0.1px #3a3434,283.2px 130.2px 1.2px 0.1px #3c3c3c,433.9px 161.5px 1.2px 0.1px #403838,241.2px 378.5px 1.2px 0.1px #383a38,143.2px 220.3px 1.2px 0.1px #343434,386.0px 281.3px 1.2px 0.1px #403838,197.9px 165.8px 1.2px 0.1px #4a4040,348.9px 141.8px 1.2px 0.1px #343434,178.1px 166.4px 1.2px 0.1px #343434,232.7px 379.7px 1.2px 0.1px #343434,132.2px 221.2px 1.2px 0.1px #3a3434,226.9px 54.9px 1.2px 0.1px #383a38,111.7px 170.1px 1.2px 0.1px #403838,277.4px 55.5px 1.2px 0.1px #343434,224.6px 341.8px 1.2px 0.1px #383a38,361.5px 281.4px 1.2px 0.1px #3a3434,275.7px 41.5px 1.2px 0.1px #343434,172.7px 3.0px 1.2px 0.1px #4a4040,330.4px 61.2px 1.2px 0.1px #3a3434,237.1px 193.5px 1.2px 0.1px #4a4040,48.6px 33.2px 1.2px 0.1px #383a38,76.8px 26.5px 1.2px 0.1px #463c3c,129.0px 131.1px 1.2px 0.1px #4a4040,194.3px 174.3px 1.2px 0.1px #3a3434,290.6px 189.2px 1.2px 0.1px #3c3c3c,344.2px 53.7px 1.2px 0.1px #343434,235.7px 364.6px 1.2px 0.1px #3c3c3c,242.1px 328.1px 1.2px 0.1px #3c3c3c,222.0px 313.9px 1.2px 0.1px #463c3c,257.7px 42.9px 1.2px 0.1px #3c3c3c,286.1px 24.8px 1.2px 0.1px #463c3c,149.9px 34.9px 1.2px 0.1px #403838,233.2px 53.9px 1.2px 0.1px #343434,382.7px 95.0px 1.2px 0.1px #383a38,304.6px 272.9px 1.2px 0.1px #403838,308.9px 329.4px 1.2px 0.1px #463c3c,389.2px 268.3px 1.2px 0.1px #343434,160.2px 147.4px 1.2px 0.1px #3c3c3c,151.2px 189.8px 1.2px 0.1px #463c3c,344.5px 351.2px 1.2px 0.1px #3a3434,384.4px 283.7px 1.2px 0.1px #524646,277.0px 36.9px 1.2px 0.1px #4a4040,202.8px 156.8px 1.2px 0.1px #3c3c3c,249.9px 213.5px 1.2px 0.1px #3a3434,432.4px 31.2px 1.2px 0.1px #383a38,363.2px 219.5px 1.2px 0.1px #463c3c,234.1px 102.1px 1.2px 0.1px #524646,129.2px 214.6px 1.2px 0.1px #3a3434,88.4px 61.8px 1.2px 0.1px #524646,271.9px 98.3px 1.2px 0.1px #3c3c3c,364.6px 89.8px 1.2px 0.1px #403838,346.9px 326.5px 1.2px 0.1px #343434,392.0px 19.3px 1.2px 0.1px #463c3c,343.2px 148.3px 1.2px 0.1px #524646,183.8px 179.2px 1.2px 0.1px #4a4040,253.2px 158.2px 1.2px 0.1px #383a38,187.4px 233.8px 1.2px 0.1px #524646,165.6px 203.0px 1.2px 0.1px #4a4040,402.4px 132.6px 1.2px 0.1px #4a4040,249.3px 42.6px 1.2px 0.1px #524646,252.0px 238.4px 1.2px 0.1px #403838,280.1px 339.0px 1.2px 0.1px #524646,434.8px 255.2px 1.2px 0.1px #524646,125.7px 151.0px 1.2px 0.1px #3a3434,273.5px 175.0px 1.2px 0.1px #524646,352.0px 148.5px 1.2px 0.1px #4a4040,245.0px 235.8px 1.2px 0.1px #3a3434,127.4px 43.8px 1.2px 0.1px #3a3434,264.0px 20.4px 1.2px 0.1px #524646,238.5px 172.3px 1.2px 0.1px #463c3c,310.1px 224.5px 1.2px 0.1px #463c3c,358.2px 47.4px 1.2px 0.1px #383a38,292.6px 58.4px 1.2px 0.1px #4a4040,187.8px 85.4px 1.2px 0.1px #524646,294.7px 262.6px 1.2px 0.1px #383a38,405.2px 95.2px 1.2px 0.1px #3a3434,178.8px 99.5px 1.2px 0.1px #403838,257.5px 63.0px 1.2px 0.1px #463c3c,274.2px 274.8px 1.2px 0.1px #3c3c3c,157.4px 174.8px 1.2px 0.1px #4a4040,436.0px 299.3px 1.2px 0.1px #383a38,100.2px 335.3px 1.2px 0.1px #383a38,299.5px 11.8px 1.2px 0.1px #403838,317.0px 119.0px 1.2px 0.1px #4a4040,188.4px 248.1px 1.2px 0.1px #3c3c3c,409.9px 373.6px 1.2px 0.1px #4a4040,426.1px 147.1px 1.2px 0.1px #3a3434,405.6px 334.5px 1.2px 0.1px #343434,351.7px 180.1px 1.2px 0.1px #3c3c3c,179.3px 354.3px 1.2px 0.1px #383a38,278.4px 83.9px 1.2px 0.1px #3a3434,344.4px 253.1px 1.2px 0.1px #4a4040,231.1px 257.6px 1.2px 0.1px #463c3c,46.8px 7.1px 1.2px 0.1px #463c3c,146.2px 90.6px 1.2px 0.1px #3a3434,294.7px 2.9px 1.2px 0.1px #403838,120.4px 259.1px 1.2px 0.1px #524646,422.6px 242.2px 1.2px 0.1px #403838,355.0px 295.4px 1.2px 0.1px #3c3c3c,118.7px 7.5px 1.2px 0.1px #3a3434,407.8px 308.1px 1.2px 0.1px #403838,312.7px 168.2px 1.2px 0.1px #403838,354.4px 43.3px 1.2px 0.1px #4a4040,242.1px 88.3px 1.2px 0.1px #4a4040,114.5px 310.0px 1.2px 0.1px #524646,302.7px 224.8px 1.2px 0.1px #4a4040,108.5px 205.9px 1.2px 0.1px #3c3c3c,131.4px 222.7px 1.2px 0.1px #3a3434,171.6px 340.7px 1.2px 0.1px #403838,195.6px 212.8px 1.2px 0.1px #343434,353.2px 98.2px 1.2px 0.1px #524646,265.1px 321.0px 1.2px 0.1px #463c3c,299.5px 369.2px 1.2px 0.1px #4a4040,152.0px 326.6px 1.2px 0.1px #343434,135.4px 273.0px 1.2px 0.1px #403838,435.0px 250.4px 1.2px 0.1px #403838,218.9px 202.4px 1.2px 0.1px #3c3c3c,351.4px 208.6px 1.2px 0.1px #3a3434,201.1px 210.4px 1.2px 0.1px #463c3c,398.6px 152.1px 1.2px 0.1px #383a38,274.8px 46.2px 1.2px 0.1px #3a3434,209.1px 128.6px 1.2px 0.1px #383a38,350.3px 132.9px 1.2px 0.1px #383a38,185.5px 151.3px 1.2px 0.1px #524646,398.9px 153.4px 1.2px 0.1px #343434,354.6px 330.0px 1.2px 0.1px #463c3c,429.4px 298.9px 1.2px 0.1px #524646,209.5px 138.8px 1.2px 0.1px #403838,321.7px 140.6px 1.2px 0.1px #463c3c,368.3px 302.0px 1.2px 0.1px #3c3c3c,135.2px 355.4px 1.2px 0.1px #4a4040,230.0px 92.2px 1.2px 0.1px #3c3c3c,246.4px 148.7px 1.2px 0.1px #4a4040,146.2px 263.1px 1.2px 0.1px #3c3c3c,133.4px 57.1px 1.2px 0.1px #3c3c3c,325.1px 277.7px 1.2px 0.1px #343434,316.1px 218.2px 1.2px 0.1px #524646,336.2px 350.4px 1.2px 0.1px #343434,340.5px 270.9px 1.2px 0.1px #4a4040,262.1px 87.9px 1.2px 0.1px #3c3c3c,322.8px 343.9px 1.2px 0.1px #524646,230.2px 229.0px 1.2px 0.1px #403838,254.4px 10.8px 1.2px 0.1px #343434,132.4px 254.4px 1.2px 0.1px #343434,272.1px 273.8px 1.2px 0.1px #524646,237.5px 366.4px 1.2px 0.1px #343434,160.5px 236.1px 1.2px 0.1px #403838,306.8px 273.3px 1.2px 0.1px #4a4040,233.9px 86.0px 1.2px 0.1px #3c3c3c,311.7px 284.5px 1.2px 0.1px #4a4040,158.0px 26.8px 1.2px 0.1px #343434,424.7px 220.6px 1.2px 0.1px #463c3c,348.2px 54.2px 1.2px 0.1px #343434,289.1px 149.8px 1.2px 0.1px #463c3c,315.2px 327.6px 1.2px 0.1px #3c3c3c,198.1px 246.5px 1.2px 0.1px #463c3c,257.6px 317.1px 1.2px 0.1px #343434,225.9px 158.1px 1.2px 0.1px #3c3c3c,261.7px 323.6px 1.2px 0.1px #4a4040,320.5px 178.1px 1.2px 0.1px #383a38,314.7px 279.8px 1.2px 0.1px #524646,201.1px 197.5px 1.2px 0.1px #403838,406.0px 317.2px 1.2px 0.1px #463c3c,215.4px 256.7px 1.2px 0.1px #3a3434,122.5px 169.9px 1.2px 0.1px #403838,388.4px 137.7px 1.2px 0.1px #383a38,149.9px 353.2px 1.2px 0.1px #463c3c,331.9px 375.2px 1.2px 0.1px #403838,401.9px 318.4px 1.2px 0.1px #4a4040,333.5px 241.2px 1.2px 0.1px #383a38,137.8px 117.5px 1.2px 0.1px #3c3c3c,145.4px 229.9px 1.2px 0.1px #3a3434,405.9px 292.1px 1.2px 0.1px #343434,281.4px 340.9px 1.2px 0.1px #3a3434,207.0px 290.8px 1.2px 0.1px #383a38,383.8px 194.5px 1.2px 0.1px #3c3c3c,327.8px 136.2px 1.2px 0.1px #524646,107.7px 264.9px 1.2px 0.1px #524646,130.0px 227.3px 1.2px 0.1px #463c3c,324.7px 41.9px 1.2px 0.1px #524646,300.9px 22.9px 1.2px 0.1px #343434,214.3px 157.5px 1.2px 0.1px #3a3434,197.6px 330.3px 1.2px 0.1px #3c3c3c,432.7px 343.9px 1.2px 0.1px #524646,320.6px 319.6px 1.2px 0.1px #524646,340.5px 120.3px 1.2px 0.1px #403838,111.6px 298.8px 1.2px 0.1px #3c3c3c,114.9px 172.1px 1.2px 0.1px #3a3434,366.4px 31.8px 1.2px 0.1px #3a3434,407.3px 265.5px 1.2px 0.1px #463c3c,334.8px 260.9px 1.2px 0.1px #403838,324.8px 219.4px 1.2px 0.1px #463c3c,108.9px 2.5px 1.2px 0.1px #403838,320.9px 192.7px 1.2px 0.1px #463c3c,289.1px 159.4px 1.2px 0.1px #4a4040,109.6px 88.1px 1.2px 0.1px #3a3434,275.5px 329.4px 1.2px 0.1px #3c3c3c,410.3px 215.9px 1.2px 0.1px #3a3434,299.9px 379.9px 1.2px 0.1px #463c3c,238.2px 112.6px 1.2px 0.1px #383a38,149.6px 86.7px 1.2px 0.1px #3a3434,305.1px 66.1px 1.2px 0.1px #403838,139.3px 223.7px 1.2px 0.1px #4a4040,180.4px 302.1px 1.2px 0.1px #463c3c,222.4px 306.2px 1.2px 0.1px #463c3c,126.7px 270.6px 1.2px 0.1px #383a38,415.0px 158.2px 1.2px 0.1px #3a3434,101.9px 86.4px 1.2px 0.1px #403838,204.2px 262.0px 1.2px 0.1px #383a38,205.5px 366.6px 1.2px 0.1px #383a38,154.6px 371.9px 1.2px 0.1px #403838,317.3px 270.9px 1.2px 0.1px #3c3c3c,362.6px 217.8px 1.2px 0.1px #4a4040,290.7px 169.7px 1.2px 0.1px #3a3434,319.3px 322.6px 1.2px 0.1px #524646,344.7px 86.7px 1.2px 0.1px #463c3c,202.9px 210.6px 1.2px 0.1px #343434,330.8px 262.5px 1.2px 0.1px #343434,194.3px 82.5px 1.2px 0.1px #4a4040,151.5px 358.2px 1.2px 0.1px #3a3434,145.8px 349.2px 1.2px 0.1px #463c3c,387.4px 324.1px 1.2px 0.1px #383a38,126.9px 248.1px 1.2px 0.1px #3c3c3c,353.1px 361.5px 1.2px 0.1px #343434,117.6px 200.6px 1.2px 0.1px #343434,297.4px 84.8px 1.2px 0.1px #3c3c3c,127.8px 324.0px 1.2px 0.1px #403838,295.1px 351.1px 1.2px 0.1px #524646,298.4px 138.7px 1.2px 0.1px #343434,360.0px 19.4px 1.2px 0.1px #524646,273.9px 126.7px 1.2px 0.1px #3a3434,265.7px 341.9px 1.2px 0.1px #524646,365.7px 128.8px 1.2px 0.1px #3a3434,274.6px 88.2px 1.2px 0.1px #3a3434,394.1px 251.6px 1.2px 0.1px #343434,362.9px 209.8px 1.2px 0.1px #383a38,376.4px 371.0px 1.2px 0.1px #4a4040,213.2px 380.4px 1.2px 0.1px #3c3c3c,56.5px 37.3px 1.2px 0.1px #383a38,385.5px 350.4px 1.2px 0.1px #3c3c3c,338.2px 109.0px 1.2px 0.1px #524646,315.8px 368.9px 1.2px 0.1px #3c3c3c,386.9px 193.3px 1.2px 0.1px #343434,173.4px 93.6px 1.2px 0.1px #4a4040,118.2px 247.9px 1.2px 0.1px #3a3434,114.0px 317.9px 1.2px 0.1px #383a38,94.2px 50.6px 1.2px 0.1px #343434,199.6px 259.4px 1.2px 0.1px #403838,224.4px 199.0px 1.2px 0.1px #524646,155.3px 153.5px 1.2px 0.1px #463c3c,401.3px 222.4px 1.2px 0.1px #343434,151.4px 331.9px 1.2px 0.1px #403838,392.7px 348.6px 1.2px 0.1px #463c3c,423.7px 359.8px 1.2px 0.1px #3c3c3c,311.6px 217.7px 1.2px 0.1px #524646,177.5px 116.7px 1.2px 0.1px #524646,125.1px 3.8px 1.2px 0.1px #383a38,147.2px 343.2px 1.2px 0.1px #4a4040,181.9px 89.6px 1.2px 0.1px #4a4040,155.1px 229.3px 1.2px 0.1px #524646,262.0px 128.0px 1.2px 0.1px #3a3434,365.8px 359.6px 1.2px 0.1px #383a38,138.5px 308.5px 1.2px 0.1px #524646,186.9px 153.6px 1.2px 0.1px #343434,152.4px 60.0px 1.2px 0.1px #3a3434,430.7px 125.3px 1.2px 0.1px #3a3434,270.6px 235.2px 1.2px 0.1px #383a38,370.6px 35.3px 1.2px 0.1px #463c3c,111.8px 204.7px 1.2px 0.1px #4a4040,144.9px 136.0px 1.2px 0.1px #343434,164.9px 105.8px 1.2px 0.1px #403838,346.5px 310.4px 1.2px 0.1px #463c3c,306.2px 294.3px 1.2px 0.1px #343434,166.8px 101.7px 1.2px 0.1px #3c3c3c,409.5px 237.5px 1.2px 0.1px #524646,384.2px 341.4px 1.2px 0.1px #383a38,200.6px 51.1px 1.2px 0.1px #463c3c,188.5px 137.8px 1.2px 0.1px #524646,318.3px 38.5px 1.2px 0.1px #3a3434,414.9px 372.6px 1.2px 0.1px #403838,323.3px 54.7px 1.2px 0.1px #524646,393.2px 254.9px 1.2px 0.1px #3a3434,134.6px 301.3px 1.2px 0.1px #383a38,278.4px 243.2px 1.2px 0.1px #3a3434,128.1px 267.7px 1.2px 0.1px #463c3c,136.7px 54.7px 1.2px 0.1px #3a3434,408.4px 49.5px 1.2px 0.1px #4a4040,277.0px 38.6px 1.2px 0.1px #343434,133.0px 342.9px 1.2px 0.1px #463c3c,85.5px 33.1px 1.2px 0.1px #4a4040,84.9px 59.3px 1.2px 0.1px #343434,148.1px 253.9px 1.2px 0.1px #3c3c3c,378.8px 363.3px 1.2px 0.1px #3c3c3c,301.0px 262.8px 1.2px 0.1px #3a3434,418.0px 315.1px 1.2px 0.1px #524646,383.1px 296.7px 1.2px 0.1px #524646,386.2px 98.1px 1.2px 0.1px #463c3c,415.7px 156.8px 1.2px 0.1px #3c3c3c,101.9px 114.7px 1.2px 0.1px #463c3c,210.1px 33.8px 1.2px 0.1px #3a3434,241.0px 201.1px 1.2px 0.1px #383a38,373.2px 347.3px 1.2px 0.1px #3a3434,293.9px 17.8px 1.2px 0.1px #4a4040,372.2px 92.7px 1.2px 0.1px #403838,274.9px 212.1px 1.2px 0.1px #3a3434,201.8px 276.3px 1.2px 0.1px #403838,421.6px 61.7px 1.2px 0.1px #4a4040,273.3px 62.4px 1.2px 0.1px #383a38,88.8px 19.7px 1.2px 0.1px #3c3c3c,191.2px 302.8px 1.2px 0.1px #4a4040,305.4px 253.1px 1.2px 0.1px #3c3c3c,339.5px 220.3px 1.2px 0.1px #4a4040,257.4px 175.2px 1.2px 0.1px #343434,162.2px 245.8px 1.2px 0.1px #3c3c3c,177.8px 57.7px 1.2px 0.1px #343434,208.7px 163.0px 1.2px 0.1px #343434,360.5px 129.6px 1.2px 0.1px #403838,216.3px 279.3px 1.2px 0.1px #3c3c3c,218.4px 310.9px 1.2px 0.1px #343434,328.4px 362.2px 1.2px 0.1px #3c3c3c,217.8px 284.6px 1.2px 0.1px #4a4040,274.0px 303.6px 1.2px 0.1px #383a38,312.4px 271.6px 1.2px 0.1px #463c3c,133.1px 205.1px 1.2px 0.1px #403838,425.3px 253.6px 1.2px 0.1px #3c3c3c,193.0px 268.4px 1.2px 0.1px #403838,251.8px 219.4px 1.2px 0.1px #524646,230.8px 248.6px 1.2px 0.1px #3c3c3c,100.3px 305.7px 1.2px 0.1px #383a38,200.0px 243.1px 1.2px 0.1px #463c3c,226.2px 151.6px 1.2px 0.1px #524646,384.8px 333.4px 1.2px 0.1px #524646,243.0px 355.2px 1.2px 0.1px #3a3434,139.1px 60.0px 1.2px 0.1px #4a4040,361.0px 243.5px 1.2px 0.1px #3c3c3c,273.9px 287.6px 1.2px 0.1px #3c3c3c,111.8px 284.9px 1.2px 0.1px #383a38,328.0px 239.6px 1.2px 0.1px #403838,268.3px 276.6px 1.2px 0.1px #463c3c,425.9px 228.0px 1.2px 0.1px #383a38,403.7px 258.2px 1.2px 0.1px #403838,206.1px 375.5px 1.2px 0.1px #4a4040,135.6px 350.4px 1.2px 0.1px #524646,434.7px 348.4px 1.2px 0.1px #3c3c3c,276.2px 326.8px 1.2px 0.1px #343434,162.0px 136.7px 1.2px 0.1px #403838,435.9px 273.0px 1.2px 0.1px #3a3434,101.6px 82.8px 1.2px 0.1px #3a3434,233.2px 111.5px 1.2px 0.1px #3a3434,164.9px 231.4px 1.2px 0.1px #4a4040,402.5px 236.3px 1.2px 0.1px #463c3c,237.8px 118.5px 1.2px 0.1px #463c3c,271.2px 90.7px 1.2px 0.1px #403838,275.6px 328.9px 1.2px 0.1px #3c3c3c,119.1px 85.7px 1.2px 0.1px #524646,131.8px 18.5px 1.2px 0.1px #3a3434,131.8px 353.2px 1.2px 0.1px #403838,250.9px 197.7px 1.2px 0.1px #3a3434,232.6px 311.2px 1.2px 0.1px #3a3434,308.9px 156.8px 1.2px 0.1px #3a3434,297.6px 134.1px 1.2px 0.1px #3a3434,375.4px 173.1px 1.2px 0.1px #4a4040,266.5px 366.9px 1.2px 0.1px #343434,327.5px 257.4px 1.2px 0.1px #3c3c3c,395.6px 227.3px 1.2px 0.1px #343434,104.3px 25.4px 1.2px 0.1px #3a3434,196.8px 250.5px 1.2px 0.1px #403838,394.3px 182.8px 1.2px 0.1px #403838,241.6px 355.9px 1.2px 0.1px #343434,256.8px 185.3px 1.2px 0.1px #3c3c3c,303.0px 22.9px 1.2px 0.1px #463c3c,142.2px 140.9px 1.2px 0.1px #463c3c,256.8px 320.5px 1.2px 0.1px #343434,218.0px 298.7px 1.2px 0.1px #3c3c3c,295.5px 171.2px 1.2px 0.1px #383a38,175.3px 217.8px 1.2px 0.1px #463c3c,437.3px 260.8px 1.2px 0.1px #383a38,223.1px 155.9px 1.2px 0.1px #343434,337.8px 45.4px 1.2px 0.1px #403838,189.9px 313.5px 1.2px 0.1px #3c3c3c,324.7px 9.7px 1.2px 0.1px #3a3434,127.3px 135.1px 1.2px 0.1px #343434,323.3px 114.7px 1.2px 0.1px #524646,355.9px 139.8px 1.2px 0.1px #4a4040,152.0px 54.7px 1.2px 0.1px #3c3c3c,235.1px 354.7px 1.2px 0.1px #463c3c,158.0px 192.0px 1.2px 0.1px #524646,106.6px 293.1px 1.2px 0.1px #383a38,385.9px 187.6px 1.2px 0.1px #403838,137.2px 355.8px 1.2px 0.1px #343434,111.8px 94.0px 1.2px 0.1px #463c3c,355.4px 128.9px 1.2px 0.1px #3a3434,312.0px 364.5px 1.2px 0.1px #343434,341.7px 158.4px 1.2px 0.1px #3c3c3c,293.6px 362.7px 1.2px 0.1px #403838,362.0px 167.9px 1.2px 0.1px #3a3434,296.9px 290.8px 1.2px 0.1px #343434,110.6px 177.6px 1.2px 0.1px #524646,127.3px 290.4px 1.2px 0.1px #3c3c3c,307.2px 148.2px 1.2px 0.1px #403838,420.9px 214.8px 1.2px 0.1px #524646,349.1px 331.0px 1.2px 0.1px #383a38,328.0px 143.8px 1.2px 0.1px #463c3c,162.4px 367.7px 1.2px 0.1px #4a4040,153.7px 316.3px 1.2px 0.1px #343434,182.9px 99.8px 1.2px 0.1px #524646,129.5px 273.0px 1.2px 0.1px #463c3c,320.2px 44.9px 1.2px 0.1px #343434,100.0px 289.5px 1.2px 0.1px #463c3c,217.5px 171.8px 1.2px 0.1px #463c3c,179.9px 270.8px 1.2px 0.1px #403838,356.6px 132.8px 1.2px 0.1px #463c3c,254.8px 311.8px 1.2px 0.1px #343434,152.3px 24.2px 1.2px 0.1px #343434,396.1px 20.4px 1.2px 0.1px #403838,250.3px 115.9px 1.2px 0.1px #524646,291.5px 168.9px 1.2px 0.1px #403838,224.3px 65.6px 1.2px 0.1px #383a38,324.3px 65.7px 1.2px 0.1px #4a4040,232.5px 29.1px 1.2px 0.1px #343434,207.4px 189.8px 1.2px 0.1px #403838,311.4px 362.6px 1.2px 0.1px #4a4040,124.6px 306.2px 1.2px 0.1px #3a3434,383.5px 170.9px 1.2px 0.1px #463c3c,276.6px 350.7px 1.2px 0.1px #463c3c,325.0px 20.8px 1.2px 0.1px #524646,318.1px 188.9px 1.2px 0.1px #343434,285.4px 192.8px 1.2px 0.1px #4a4040,112.0px 252.1px 1.2px 0.1px #3c3c3c,419.3px 230.3px 1.2px 0.1px #383a38,436.5px 262.8px 1.2px 0.1px #403838,127.5px 9.3px 1.2px 0.1px #3c3c3c,52.1px 29.4px 1.2px 0.1px #343434,224.6px 91.6px 1.2px 0.1px #3c3c3c,64.9px 3.7px 1.2px 0.1px #3c3c3c,119.3px 84.6px 1.2px 0.1px #463c3c,153.9px 170.7px 1.2px 0.1px #383a38,327.6px 252.3px 1.2px 0.1px #383a38,166.1px 30.9px 1.2px 0.1px #463c3c,425.0px 268.0px 1.2px 0.1px #3a3434,210.7px 279.5px 1.2px 0.1px #3c3c3c,261.4px 276.2px 1.2px 0.1px #4a4040,278.3px 272.1px 1.2px 0.1px #343434,349.5px 289.4px 1.2px 0.1px #463c3c,224.5px 256.2px 1.2px 0.1px #3c3c3c,179.7px 214.4px 1.2px 0.1px #4a4040,108.6px 59.6px 1.2px 0.1px #403838,382.7px 276.9px 1.2px 0.1px #343434,183.5px 228.8px 1.2px 0.1px #383a38,292.7px 115.9px 1.2px 0.1px #403838,329.0px 322.1px 1.2px 0.1px #463c3c,285.2px 296.4px 1.2px 0.1px #403838,424.5px 236.5px 1.2px 0.1px #383a38,231.3px 133.4px 1.2px 0.1px #343434,361.5px 123.0px 1.2px 0.1px #3a3434,114.1px 94.5px 1.2px 0.1px #343434,139.0px 122.7px 1.2px 0.1px #403838,394.5px 250.9px 1.2px 0.1px #524646,351.4px 184.4px 1.2px 0.1px #3a3434,139.7px 193.9px 1.2px 0.1px #524646,112.8px 263.1px 1.2px 0.1px #403838,209.3px 262.9px 1.2px 0.1px #3a3434,327.6px 158.4px 1.2px 0.1px #343434,105.2px 378.6px 1.2px 0.1px #383a38,44.4px 7.4px 1.2px 0.1px #4a4040,286.4px 169.0px 1.2px 0.1px #3c3c3c,298.0px 157.1px 1.2px 0.1px #4a4040,102.7px 184.7px 1.2px 0.1px #463c3c,262.5px 91.5px 1.2px 0.1px #3a3434,285.4px 43.2px 1.2px 0.1px #3c3c3c,427.0px 289.9px 1.2px 0.1px #383a38,394.8px 265.3px 1.2px 0.1px #403838,277.6px 175.4px 1.2px 0.1px #463c3c,112.8px 132.9px 1.2px 0.1px #524646,210.7px 222.5px 1.2px 0.1px #524646,212.1px 227.0px 1.2px 0.1px #343434,220.7px 66.1px 1.2px 0.1px #3a3434,345.2px 125.1px 1.2px 0.1px #3c3c3c,268.0px 160.6px 1.2px 0.1px #463c3c,109.6px 250.2px 1.2px 0.1px #403838,361.3px 271.9px 1.2px 0.1px #403838,193.7px 320.6px 1.2px 0.1px #463c3c,201.4px 311.0px 1.2px 0.1px #524646,314.0px 187.1px 1.2px 0.1px #3c3c3c,337.4px 283.5px 1.2px 0.1px #383a38,402.0px 324.8px 1.2px 0.1px #524646,167.8px 348.6px 1.2px 0.1px #383a38,232.7px 313.7px 1.2px 0.1px #463c3c,146.9px 298.0px 1.2px 0.1px #4a4040,285.4px 363.2px 1.2px 0.1px #524646,112.5px 62.0px 1.2px 0.1px #463c3c,218.2px 222.4px 1.2px 0.1px #3c3c3c,411.5px 333.6px 1.2px 0.1px #524646,191.8px 159.3px 1.2px 0.1px #3a3434,311.0px 153.1px 1.2px 0.1px #3a3434,233.9px 142.1px 1.2px 0.1px #4a4040,318.4px 141.0px 1.2px 0.1px #3a3434,302.3px 105.8px 1.2px 0.1px #524646,99.7px 163.2px 1.2px 0.1px #3a3434,411.8px 145.7px 1.2px 0.1px #524646,107.2px 227.9px 1.2px 0.1px #524646,391.5px 320.9px 1.2px 0.1px #403838,211.7px 230.3px 1.2px 0.1px #3c3c3c,255.5px 86.1px 1.2px 0.1px #524646,433.8px 98.8px 1.2px 0.1px #524646,104.3px 145.1px 1.2px 0.1px #403838,221.0px 185.2px 1.2px 0.1px #463c3c,302.5px 181.3px 1.2px 0.1px #4a4040,260.4px 91.5px 1.2px 0.1px #4a4040,284.8px 293.9px 1.2px 0.1px #4a4040,278.1px 164.2px 1.2px 0.1px #4a4040,227.3px 43.9px 1.2px 0.1px #524646,311.8px 202.3px 1.2px 0.1px #403838,310.4px 118.7px 1.2px 0.1px #343434,159.8px 363.9px 1.2px 0.1px #524646,405.0px 343.3px 1.2px 0.1px #463c3c,217.3px 294.9px 1.2px 0.1px #383a38,267.6px 272.8px 1.2px 0.1px #524646,230.3px 145.6px 1.2px 0.1px #3a3434,330.8px 4.4px 1.2px 0.1px #3c3c3c,217.2px 150.4px 1.2px 0.1px #3c3c3c,410.5px 365.5px 1.2px 0.1px #343434,44.3px 47.5px 1.2px 0.1px #343434,167.1px 309.8px 1.2px 0.1px #4a4040,436.1px 147.0px 1.2px 0.1px #463c3c,415.5px 312.8px 1.2px 0.1px #463c3c,194.1px 181.5px 1.2px 0.1px #383a38,182.9px 177.9px 1.2px 0.1px #383a38,115.7px 316.7px 1.2px 0.1px #524646,347.1px 29.4px 1.2px 0.1px #3c3c3c,436.2px 171.3px 1.2px 0.1px #3a3434,149.7px 355.8px 1.2px 0.1px #463c3c,149.3px 302.8px 1.2px 0.1px #403838,255.9px 201.2px 1.2px 0.1px #3c3c3c,410.3px 296.9px 1.2px 0.1px #524646,109.2px 152.4px 1.2px 0.1px #3a3434,238.9px 15.5px 1.2px 0.1px #3c3c3c,345.7px 96.5px 1.2px 0.1px #524646,80.4px 64.1px 1.2px 0.1px #463c3c,98.9px 149.2px 1.2px 0.1px #463c3c,283.5px 380.0px 1.2px 0.1px #524646,423.5px 105.2px 1.2px 0.1px #343434,428.5px 149.2px 1.2px 0.1px #403838,158.3px 161.4px 1.2px 0.1px #403838,164.8px 96.4px 1.2px 0.1px #524646,208.7px 94.4px 1.2px 0.1px #383a38,284.6px 289.1px 1.2px 0.1px #4a4040,206.2px 207.7px 1.2px 0.1px #463c3c,229.0px 205.0px 1.2px 0.1px #463c3c,313.9px 153.7px 1.2px 0.1px #4a4040,346.2px 379.3px 1.2px 0.1px #343434,127.5px 268.2px 1.2px 0.1px #3a3434,114.8px 290.3px 1.2px 0.1px #524646,248.4px 282.4px 1.2px 0.1px #383a38,98.3px 305.9px 1.2px 0.1px #383a38,299.4px 380.4px 1.2px 0.1px #343434,367.1px 342.8px 1.2px 0.1px #524646,231.8px 239.9px 1.2px 0.1px #524646,356.5px 44.5px 1.2px 0.1px #4a4040,383.9px 339.3px 1.2px 0.1px #524646,260.1px 148.4px 1.2px 0.1px #463c3c,340.4px 24.4px 1.2px 0.1px #343434,374.5px 153.6px 1.2px 0.1px #463c3c,323.0px 135.3px 1.2px 0.1px #3a3434,221.0px 341.1px 1.2px 0.1px #3c3c3c,97.8px 16.8px 1.2px 0.1px #403838,323.4px 238.8px 1.2px 0.1px #4a4040,127.9px 200.7px 1.2px 0.1px #383a38,250.8px 225.5px 1.2px 0.1px #463c3c,149.0px 286.1px 1.2px 0.1px #524646,322.5px 268.8px 1.2px 0.1px #524646,184.0px 248.9px 1.2px 0.1px #3a3434,117.6px 135.5px 1.2px 0.1px #4a4040,184.9px 161.6px 1.2px 0.1px #383a38,291.7px 57.5px 1.2px 0.1px #343434,421.3px 19.5px 1.2px 0.1px #524646,341.9px 194.7px 1.2px 0.1px #3a3434,198.4px 204.4px 1.2px 0.1px #4a4040,229.0px 255.6px 1.2px 0.1px #343434,387.6px 256.1px 1.2px 0.1px #403838,210.0px 103.2px 1.2px 0.1px #383a38,276.8px 231.0px 1.2px 0.1px #3a3434,262.5px 62.6px 1.2px 0.1px #3c3c3c,259.0px 349.1px 1.2px 0.1px #383a38,144.0px 307.8px 1.2px 0.1px #3a3434,349.8px 202.5px 1.2px 0.1px #3a3434,198.0px 181.0px 1.2px 0.1px #3c3c3c,138.2px 148.2px 1.2px 0.1px #403838,103.3px 231.1px 1.2px 0.1px #343434,116.7px 286.3px 1.2px 0.1px #524646,116.6px 289.3px 1.2px 0.1px #3c3c3c,145.7px 204.1px 1.2px 0.1px #3a3434,147.5px 182.3px 1.2px 0.1px #3a3434,281.2px 238.0px 1.2px 0.1px #403838,184.7px 339.7px 1.2px 0.1px #3c3c3c,240.9px 97.3px 1.2px 0.1px #4a4040,227.3px 212.8px 1.2px 0.1px #4a4040,142.8px 144.3px 1.2px 0.1px #524646,321.1px 295.0px 1.2px 0.1px #463c3c,370.5px 142.1px 1.2px 0.1px #3a3434,100.9px 102.3px 1.2px 0.1px #524646,124.3px 29.4px 1.2px 0.1px #343434,370.8px 259.6px 1.2px 0.1px #383a38,345.5px 143.2px 1.2px 0.1px #343434,210.4px 42.8px 1.2px 0.1px #3a3434,389.7px 54.6px 1.2px 0.1px #383a38,411.6px 250.3px 1.2px 0.1px #463c3c,327.1px 284.5px 1.2px 0.1px #4a4040,279.7px 129.7px 1.2px 0.1px #343434,256.3px 142.5px 1.2px 0.1px #403838,239.0px 279.7px 1.2px 0.1px #4a4040,248.4px 209.4px 1.2px 0.1px #3a3434,143.4px 130.0px 1.2px 0.1px #383a38,177.1px 256.6px 1.2px 0.1px #524646,342.6px 174.9px 1.2px 0.1px #4a4040,384.0px 127.6px 1.2px 0.1px #343434,109.2px 196.0px 1.2px 0.1px #4a4040,283.5px 110.1px 1.2px 0.1px #383a38,109.9px 22.3px 1.2px 0.1px #3c3c3c,369.1px 8.2px 1.2px 0.1px #343434,417.4px 239.9px 1.2px 0.1px #4a4040,104.0px 316.4px 1.2px 0.1px #403838,193.2px 172.9px 1.2px 0.1px #403838,258.0px 312.3px 1.2px 0.1px #343434,200.0px 256.0px 1.2px 0.1px #403838,215.1px 365.3px 1.2px 0.1px #4a4040,169.9px 30.1px 1.2px 0.1px #343434,221.8px 114.9px 1.2px 0.1px #4a4040,344.1px 218.5px 1.2px 0.1px #403838,300.5px 220.4px 1.2px 0.1px #3a3434,268.9px 27.7px 1.2px 0.1px #463c3c,382.6px 104.9px 1.2px 0.1px #463c3c,323.3px 109.0px 1.2px 0.1px #3a3434,395.0px 226.1px 1.2px 0.1px #463c3c,134.2px 153.6px 1.2px 0.1px #463c3c,280.2px 117.3px 1.2px 0.1px #383a38,291.2px 94.6px 1.2px 0.1px #4a4040,165.2px 203.1px 1.2px 0.1px #343434,406.9px 300.0px 1.2px 0.1px #343434,103.1px 365.0px 1.2px 0.1px #383a38,336.5px 145.3px 1.2px 0.1px #343434,104.9px 56.4px 1.2px 0.1px #3a3434,310.2px 114.9px 1.2px 0.1px #403838,268.6px 15.7px 1.2px 0.1px #3a3434,122.8px 183.2px 1.2px 0.1px #403838,284.5px 46.4px 1.2px 0.1px #4a4040,373.6px 220.5px 1.2px 0.1px #463c3c,414.0px 27.6px 1.2px 0.1px #3c3c3c,353.0px 9.9px 1.2px 0.1px #463c3c,215.1px 124.1px 1.2px 0.1px #343434,331.3px 294.6px 1.2px 0.1px #403838,367.1px 225.9px 1.2px 0.1px #383a38,210.2px 102.7px 1.2px 0.1px #403838,310.6px 335.7px 1.2px 0.1px #3c3c3c,324.4px 23.4px 1.2px 0.1px #463c3c,265.5px 313.6px 1.2px 0.1px #383a38,369.0px 62.8px 1.2px 0.1px #3a3434,381.0px 322.7px 1.2px 0.1px #463c3c,378.6px 317.3px 1.2px 0.1px #4a4040,299.8px 278.6px 1.2px 0.1px #403838,350.8px 53.8px 1.2px 0.1px #343434,297.8px 250.5px 1.2px 0.1px #383a38,415.3px 348.9px 1.2px 0.1px #3a3434,364.5px 320.1px 1.2px 0.1px #524646,236.1px 108.1px 1.2px 0.1px #524646,405.4px 210.0px 1.2px 0.1px #4a4040,232.6px 1.1px 1.2px 0.1px #403838,259.6px 205.2px 1.2px 0.1px #4a4040,212.0px 146.1px 1.2px 0.1px #524646,256.4px 91.8px 1.2px 0.1px #524646,144.9px 47.0px 1.2px 0.1px #383a38,281.0px 154.5px 1.2px 0.1px #343434,112.1px 328.9px 1.2px 0.1px #463c3c,211.1px 127.3px 1.2px 0.1px #463c3c,400.6px 265.1px 1.2px 0.1px #3c3c3c,206.3px 344.9px 1.2px 0.1px #343434,427.2px 199.3px 1.2px 0.1px #3a3434,106.5px 63.3px 1.2px 0.1px #383a38,321.4px 303.0px 1.2px 0.1px #403838,347.8px 307.9px 1.2px 0.1px #3c3c3c,338.8px 17.0px 1.2px 0.1px #3c3c3c,286.9px 29.8px 1.2px 0.1px #4a4040,322.8px 271.6px 1.2px 0.1px #3c3c3c,372.9px 99.9px 1.2px 0.1px #383a38,333.1px 87.4px 1.2px 0.1px #403838,250.2px 307.3px 1.2px 0.1px #463c3c,352.9px 92.5px 1.2px 0.1px #524646,100.4px 363.0px 1.2px 0.1px #4a4040,272.2px 38.6px 1.2px 0.1px #3a3434,157.0px 258.9px 1.2px 0.1px #4a4040,180.2px 313.9px 1.2px 0.1px #3a3434,430.6px 276.6px 1.2px 0.1px #3c3c3c,429.4px 190.1px 1.2px 0.1px #4a4040,381.4px 230.7px 1.2px 0.1px #3a3434,216.1px 124.0px 1.2px 0.1px #3a3434,349.0px 133.2px 1.2px 0.1px #4a4040,297.7px 373.4px 1.2px 0.1px #524646,161.6px 174.8px 1.2px 0.1px #383a38,207.1px 213.5px 1.2px 0.1px #403838,221.0px 177.9px 1.2px 0.1px #383a38,167.4px 354.6px 1.2px 0.1px #383a38,236.8px 130.0px 1.2px 0.1px #524646,148.1px 35.9px 1.2px 0.1px #3c3c3c,191.6px 190.8px 1.2px 0.1px #3c3c3c,196.0px 271.1px 1.2px 0.1px #4a4040,102.0px 241.7px 1.2px 0.1px #4a4040,417.6px 161.7px 1.2px 0.1px #343434,395.7px 110.9px 1.2px 0.1px #3c3c3c,340.0px 361.0px 1.2px 0.1px #463c3c,426.9px 272.2px 1.2px 0.1px #403838,232.1px 364.1px 1.2px 0.1px #524646,267.9px 183.0px 1.2px 0.1px #463c3c,146.8px 302.7px 1.2px 0.1px #3c3c3c,404.5px 122.1px 1.2px 0.1px #524646,412.3px 102.0px 1.2px 0.1px #3a3434,325.1px 255.3px 1.2px 0.1px #3c3c3c,345.8px 317.6px 1.2px 0.1px #463c3c,326.3px 308.2px 1.2px 0.1px #403838,403.6px 304.9px 1.2px 0.1px #3c3c3c,142.6px 293.2px 1.2px 0.1px #3c3c3c,191.5px 102.2px 1.2px 0.1px #4a4040,405.3px 174.8px 1.2px 0.1px #524646,429.4px 322.6px 1.2px 0.1px #524646,243.9px 8.2px 1.2px 0.1px #524646,253.6px 311.2px 1.2px 0.1px #383a38,118.1px 215.7px 1.2px 0.1px #3a3434,368.6px 7.4px 1.2px 0.1px #343434,416.3px 371.4px 1.2px 0.1px #343434,367.8px 144.7px 1.2px 0.1px #3a3434,156.8px 325.2px 1.2px 0.1px #4a4040,119.4px 271.0px 1.2px 0.1px #403838,234.0px 235.6px 1.2px 0.1px #3c3c3c,393.0px 380.7px 1.2px 0.1px #524646,210.0px 377.9px 1.2px 0.1px #403838,293.7px 211.4px 1.2px 0.1px #383a38,307.3px 115.6px 1.2px 0.1px #463c3c,164.0px 302.8px 1.2px 0.1px #3a3434,165.2px 293.1px 1.2px 0.1px #343434,166.4px 308.7px 1.2px 0.1px #4a4040,420.4px 358.0px 1.2px 0.1px #3a3434,118.7px 0.9px 1.2px 0.1px #4a4040,311.4px 251.6px 1.2px 0.1px #524646,202.0px 95.3px 1.2px 0.1px #463c3c,241.1px 90.8px 1.2px 0.1px #383a38,214.6px 339.4px 1.2px 0.1px #524646,258.2px 379.2px 1.2px 0.1px #524646,259.9px 328.6px 1.2px 0.1px #463c3c,277.6px 157.4px 1.2px 0.1px #3c3c3c,183.7px 88.4px 1.2px 0.1px #343434,419.4px 376.2px 1.2px 0.1px #3c3c3c,344.7px 130.3px 1.2px 0.1px #3c3c3c,41.2px 14.3px 1.2px 0.1px #3c3c3c,362.9px 65.2px 1.2px 0.1px #403838,112.7px 348.7px 1.2px 0.1px #403838,213.1px 249.9px 1.2px 0.1px #383a38,315.4px 143.7px 1.2px 0.1px #343434,218.6px 346.2px 1.2px 0.1px #403838,140.9px 142.0px 1.2px 0.1px #383a38,411.0px 287.6px 1.2px 0.1px #383a38,291.9px 297.8px 1.2px 0.1px #383a38,319.6px 340.6px 1.2px 0.1px #343434,257.7px 346.2px 1.2px 0.1px #463c3c,236.2px 25.6px 1.2px 0.1px #343434,400.3px 83.5px 1.2px 0.1px #343434,350.1px 93.5px 1.2px 0.1px #403838,166.0px 82.3px 1.2px 0.1px #383a38,132.7px 62.4px 1.2px 0.1px #343434,113.0px 248.9px 1.2px 0.1px #3c3c3c,150.2px 87.5px 1.2px 0.1px #403838,398.0px 111.0px 1.2px 0.1px #463c3c,153.4px 235.6px 1.2px 0.1px #403838,423.3px 196.5px 1.2px 0.1px #3a3434,47.9px 43.4px 1.2px 0.1px #403838,308.7px 260.4px 1.2px 0.1px #403838,322.9px 266.5px 1.2px 0.1px #383a38,100.6px 305.5px 1.2px 0.1px #3a3434,270.4px 333.2px 1.2px 0.1px #343434,297.3px 13.9px 1.2px 0.1px #3c3c3c,306.3px 107.9px 1.2px 0.1px #524646,127.9px 153.7px 1.2px 0.1px #403838,146.1px 20.7px 1.2px 0.1px #4a4040,279.8px 65.6px 1.2px 0.1px #343434,66.1px 7.6px 1.2px 0.1px #343434,252.9px 204.2px 1.2px 0.1px #343434,347.1px 321.0px 1.2px 0.1px #3a3434,341.7px 91.2px 1.2px 0.1px #463c3c,244.5px 345.4px 1.2px 0.1px #463c3c,197.7px 158.6px 1.2px 0.1px #463c3c,200.2px 186.5px 1.2px 0.1px #524646,153.1px 130.9px 1.2px 0.1px #383a38,382.5px 380.3px 1.2px 0.1px #524646,182.9px 205.7px 1.2px 0.1px #3a3434,283.0px 189.0px 1.2px 0.1px #524646,345.9px 16.0px 1.2px 0.1px #524646,278.9px 113.5px 1.2px 0.1px #524646,212.6px 101.3px 1.2px 0.1px #403838,152.8px 241.3px 1.2px 0.1px #343434,236.6px 356.1px 1.2px 0.1px #403838,172.1px 308.5px 1.2px 0.1px #3a3434,244.7px 117.5px 1.2px 0.1px #463c3c,306.9px 131.9px 1.2px 0.1px #4a4040,182.5px 159.1px 1.2px 0.1px #3a3434,384.2px 43.0px 1.2px 0.1px #463c3c,301.3px 290.5px 1.2px 0.1px #4a4040,329.3px 35.9px 1.2px 0.1px #403838,146.4px 115.9px 1.2px 0.1px #383a38,271.5px 345.3px 1.2px 0.1px #383a38,132.0px 172.9px 1.2px 0.1px #3c3c3c,156.9px 378.8px 1.2px 0.1px #403838,254.6px 178.8px 1.2px 0.1px #343434,369.2px 15.2px 1.2px 0.1px #343434,326.0px 165.3px 1.2px 0.1px #3a3434,122.7px 108.8px 1.2px 0.1px #4a4040,159.4px 125.1px 1.2px 0.1px #403838,117.5px 158.2px 1.2px 0.1px #403838,173.9px 101.4px 1.2px 0.1px #3a3434,414.5px 362.8px 1.2px 0.1px #524646,343.7px 123.5px 1.2px 0.1px #4a4040,154.5px 281.0px 1.2px 0.1px #343434,154.4px 310.2px 1.2px 0.1px #3a3434,163.9px 147.7px 1.2px 0.1px #3c3c3c,179.9px 349.9px 1.2px 0.1px #4a4040,115.2px 281.1px 1.2px 0.1px #524646,108.0px 213.5px 1.2px 0.1px #403838,259.2px 33.0px 1.2px 0.1px #3c3c3c,228.8px 11.6px 1.2px 0.1px #343434,118.6px 139.2px 1.2px 0.1px #4a4040,257.5px 363.0px 1.2px 0.1px #3a3434,125.4px 49.9px 1.2px 0.1px #3c3c3c,415.4px 35.2px 1.2px 0.1px #343434,271.6px 176.9px 1.2px 0.1px #403838,142.7px 61.9px 1.2px 0.1px #383a38,142.8px 324.0px 1.2px 0.1px #524646,148.8px 52.9px 1.2px 0.1px #403838,431.6px 32.3px 1.2px 0.1px #463c3c,311.4px 325.5px 1.2px 0.1px #3a3434,331.6px 91.7px 1.2px 0.1px #343434,323.9px 123.8px 1.2px 0.1px #524646,359.1px 63.4px 1.2px 0.1px #3a3434,223.0px 352.8px 1.2px 0.1px #463c3c,103.3px 219.5px 1.2px 0.1px #403838,387.0px 167.6px 1.2px 0.1px #463c3c,201.5px 176.2px 1.2px 0.1px #343434,234.7px 285.7px 1.2px 0.1px #3a3434,262.6px 101.7px 1.2px 0.1px #524646,420.4px 229.6px 1.2px 0.1px #343434,171.6px 332.2px 1.2px 0.1px #343434,364.7px 163.3px 1.2px 0.1px #524646,107.4px 27.7px 1.2px 0.1px #3a3434,359.8px 153.5px 1.2px 0.1px #3a3434,374.0px 264.0px 1.2px 0.1px #383a38,340.0px 123.3px 1.2px 0.1px #343434,191.1px 206.8px 1.2px 0.1px #463c3c,144.0px 178.4px 1.2px 0.1px #3a3434,241.8px 106.1px 1.2px 0.1px #383a38,184.1px 253.1px 1.2px 0.1px #343434,423.4px 162.7px 1.2px 0.1px #3c3c3c,211.1px 54.9px 1.2px 0.1px #3a3434,122.0px 308.0px 1.2px 0.1px #463c3c,240.8px 240.8px 1.2px 0.1px #4a4040,320.2px 235.8px 1.2px 0.1px #403838,267.9px 241.1px 1.2px 0.1px #524646,425.2px 139.8px 1.2px 0.1px #403838,184.1px 196.6px 1.2px 0.1px #4a4040,238.1px 368.9px 1.2px 0.1px #4a4040,123.0px 304.4px 1.2px 0.1px #383a38,209.6px 358.0px 1.2px 0.1px #383a38,328.5px 294.7px 1.2px 0.1px #463c3c,208.3px 373.4px 1.2px 0.1px #3c3c3c,426.3px 36.4px 1.2px 0.1px #3c3c3c,404.0px 151.7px 1.2px 0.1px #524646,266.1px 191.5px 1.2px 0.1px #343434,396.8px 115.9px 1.2px 0.1px #463c3c,307.4px 275.9px 1.2px 0.1px #383a38,418.4px 255.1px 1.2px 0.1px #524646,355.9px 176.3px 1.2px 0.1px #383a38,328.0px 316.3px 1.2px 0.1px #3c3c3c,425.2px 312.0px 1.2px 0.1px #343434,337.7px 371.9px 1.2px 0.1px #343434,387.1px 276.6px 1.2px 0.1px #463c3c,302.4px 336.9px 1.2px 0.1px #3a3434,103.1px 242.5px 1.2px 0.1px #4a4040,357.0px 56.1px 1.2px 0.1px #403838,99.3px 151.0px 1.2px 0.1px #4a4040,365.0px 152.9px 1.2px 0.1px #3a3434,411.7px 65.0px 1.2px 0.1px #463c3c,122.9px 186.7px 1.2px 0.1px #4a4040,260.8px 159.6px 1.2px 0.1px #3a3434,187.8px 161.7px 1.2px 0.1px #403838,334.9px 160.9px 1.2px 0.1px #524646,265.2px 138.5px 1.2px 0.1px #3a3434,383.2px 208.8px 1.2px 0.1px #4a4040,176.0px 321.1px 1.2px 0.1px #383a38,271.7px 12.8px 1.2px 0.1px #383a38,367.0px 151.4px 1.2px 0.1px #403838,258.4px 212.6px 1.2px 0.1px #3a3434,296.0px 114.4px 1.2px 0.1px #383a38,185.9px 209.0px 1.2px 0.1px #524646,108.5px 299.3px 1.2px 0.1px #343434,169.9px 297.4px 1.2px 0.1px #383a38,404.6px 143.4px 1.2px 0.1px #4a4040,403.5px 121.4px 1.2px 0.1px #3a3434,360.3px 330.1px 1.2px 0.1px #4a4040,275.8px 173.9px 1.2px 0.1px #524646,55.7px 34.4px 1.2px 0.1px #463c3c,312.0px 155.6px 1.2px 0.1px #3a3434,138.7px 234.0px 1.2px 0.1px #524646,260.0px 175.2px 1.2px 0.1px #403838,64.2px 25.9px 1.2px 0.1px #383a38,359.0px 34.4px 1.2px 0.1px #383a38,260.1px 295.7px 1.2px 0.1px #524646,363.1px 299.4px 1.2px 0.1px #524646,133.7px 218.7px 1.2px 0.1px #4a4040,381.0px 63.2px 1.2px 0.1px #463c3c,311.0px 2.4px 1.2px 0.1px #403838,322.6px 184.2px 1.2px 0.1px #403838,316.4px 48.0px 1.2px 0.1px #3a3434,401.7px 44.9px 1.2px 0.1px #403838,205.4px 327.6px 1.2px 0.1px #3c3c3c,157.1px 311.5px 1.2px 0.1px #3c3c3c,221.2px 349.3px 1.2px 0.1px #383a38,137.8px 159.9px 1.2px 0.1px #3c3c3c,423.2px 263.2px 1.2px 0.1px #4a4040,231.7px 142.6px 1.2px 0.1px #463c3c,409.3px 229.3px 1.2px 0.1px #524646,107.4px 235.8px 1.2px 0.1px #463c3c,307.2px 176.0px 1.2px 0.1px #524646,322.3px 98.9px 1.2px 0.1px #3a3434,293.5px 85.1px 1.2px 0.1px #4a4040,403.8px 367.6px 1.2px 0.1px #524646,206.0px 346.3px 1.2px 0.1px #524646,308.1px 200.3px 1.2px 0.1px #4a4040,127.3px 60.9px 1.2px 0.1px #3c3c3c,359.7px 252.1px 1.2px 0.1px #343434,317.0px 97.7px 1.2px 0.1px #463c3c,374.4px 158.0px 1.2px 0.1px #524646,383.5px 122.1px 1.2px 0.1px #524646,116.6px 350.8px 1.2px 0.1px #463c3c,396.8px 123.7px 1.2px 0.1px #3a3434,384.5px 375.8px 1.2px 0.1px #524646,255.0px 306.7px 1.2px 0.1px #343434,220.7px 101.2px 1.2px 0.1px #403838,106.8px 321.0px 1.2px 0.1px #343434,307.1px 231.4px 1.2px 0.1px #3a3434,255.1px 202.6px 1.2px 0.1px #383a38,203.4px 271.7px 1.2px 0.1px #383a38,215.3px 333.7px 1.2px 0.1px #524646,134.0px 258.2px 1.2px 0.1px #403838,239.6px 346.1px 1.2px 0.1px #343434,221.2px 191.0px 1.2px 0.1px #403838,291.2px 220.5px 1.2px 0.1px #3c3c3c,88.7px 66.9px 1.2px 0.1px #463c3c,376.9px 318.7px 1.2px 0.1px #524646,355.2px 40.5px 1.2px 0.1px #3a3434,398.3px 379.7px 1.2px 0.1px #3c3c3c,314.6px 105.1px 1.2px 0.1px #3c3c3c,200.6px 180.7px 1.2px 0.1px #463c3c,353.7px 85.3px 1.2px 0.1px #463c3c,226.5px 331.5px 1.2px 0.1px #463c3c,407.5px 247.4px 1.2px 0.1px #403838,221.0px 359.2px 1.2px 0.1px #343434,404.5px 337.3px 1.2px 0.1px #343434,415.1px 250.0px 1.2px 0.1px #463c3c,247.0px 91.1px 1.2px 0.1px #463c3c,186.1px 164.8px 1.2px 0.1px #3c3c3c,311.7px 98.2px 1.2px 0.1px #3a3434,405.1px 131.6px 1.2px 0.1px #343434,176.9px 328.6px 1.2px 0.1px #343434,405.4px 142.6px 1.2px 0.1px #403838,340.1px 295.2px 1.2px 0.1px #4a4040,242.3px 235.3px 1.2px 0.1px #383a38,248.5px 107.9px 1.2px 0.1px #403838,288.2px 206.5px 1.2px 0.1px #524646,315.2px 381.3px 1.2px 0.1px #524646,343.4px 381.0px 1.2px 0.1px #343434,237.4px 267.5px 1.2px 0.1px #4a4040,313.9px 215.7px 1.2px 0.1px #463c3c,205.4px 233.4px 1.2px 0.1px #463c3c,383.6px 312.6px 1.2px 0.1px #383a38,192.2px 237.6px 1.2px 0.1px #383a38,147.2px 132.8px 1.2px 0.1px #403838,228.4px 102.9px 1.2px 0.1px #403838,242.6px 187.6px 1.2px 0.1px #3c3c3c,256.2px 332.4px 1.2px 0.1px #3a3434,351.3px 31.9px 1.2px 0.1px #3c3c3c,308.7px 128.9px 1.2px 0.1px #3a3434,147.4px 191.8px 1.2px 0.1px #3c3c3c,298.6px 285.2px 1.2px 0.1px #524646,151.2px 247.6px 1.2px 0.1px #463c3c,144.2px 353.3px 1.2px 0.1px #3a3434,372.2px 214.2px 1.2px 0.1px #4a4040,402.4px 187.0px 1.2px 0.1px #524646,260.2px 181.8px 1.2px 0.1px #3c3c3c,290.2px 339.1px 1.2px 0.1px #3a3434,229.8px 190.9px 1.2px 0.1px #3a3434,211.0px 328.4px 1.2px 0.1px #463c3c,226.3px 104.7px 1.2px 0.1px #343434,359.8px 9.8px 1.2px 0.1px #343434,246.5px 118.6px 1.2px 0.1px #403838,285.3px 358.6px 1.2px 0.1px #403838,148.5px 333.3px 1.2px 0.1px #3a3434,389.9px 197.7px 1.2px 0.1px #403838,339.0px 135.8px 1.2px 0.1px #463c3c,111.0px 98.8px 1.2px 0.1px #403838,167.8px 46.5px 1.2px 0.1px #463c3c,101.1px 12.1px 1.2px 0.1px #524646,427.6px 190.2px 1.2px 0.1px #3c3c3c,237.1px 215.8px 1.2px 0.1px #383a38,436.3px 293.8px 1.2px 0.1px #463c3c,401.6px 320.1px 1.2px 0.1px #3a3434,309.5px 353.6px 1.2px 0.1px #383a38,398.7px 86.1px 1.2px 0.1px #383a38,302.3px 183.1px 1.2px 0.1px #3c3c3c,148.1px 96.4px 1.2px 0.1px #463c3c,332.0px 129.0px 1.2px 0.1px #3a3434,411.8px 292.5px 1.2px 0.1px #3a3434,221.1px 293.7px 1.2px 0.1px #343434,345.7px 204.6px 1.2px 0.1px #383a38,413.8px 266.6px 1.2px 0.1px #524646,162.9px 380.1px 1.2px 0.1px #343434,366.0px 328.4px 1.2px 0.1px #524646,355.6px 160.7px 1.2px 0.1px #524646,389.6px 228.6px 1.2px 0.1px #4a4040,434.2px 229.6px 1.2px 0.1px #3a3434,341.9px 38.4px 1.2px 0.1px #4a4040,243.3px 362.0px 1.2px 0.1px #403838,143.4px 194.9px 1.2px 0.1px #403838,246.0px 346.8px 1.2px 0.1px #4a4040,216.5px 24.7px 1.2px 0.1px #3a3434,343.4px 146.4px 1.2px 0.1px #4a4040,224.0px 358.0px 1.2px 0.1px #3c3c3c,333.5px 276.2px 1.2px 0.1px #4a4040,391.6px 202.4px 1.2px 0.1px #383a38,113.8px 332.9px 1.2px 0.1px #4a4040,433.3px 36.2px 1.2px 0.1px #463c3c,387.5px 339.4px 1.2px 0.1px #4a4040,109.3px 225.4px 1.2px 0.1px #403838,354.0px 59.2px 1.2px 0.1px #343434,257.5px 297.6px 1.2px 0.1px #4a4040,415.1px 137.6px 1.2px 0.1px #463c3c,355.7px 275.5px 1.2px 0.1px #4a4040,153.7px 361.0px 1.2px 0.1px #383a38,174.1px 159.9px 1.2px 0.1px #3a3434,406.2px 265.9px 1.2px 0.1px #403838,279.2px 338.5px 1.2px 0.1px #383a38,239.6px 222.9px 1.2px 0.1px #524646,351.2px 151.6px 1.2px 0.1px #383a38,278.2px 140.8px 1.2px 0.1px #4a4040,330.5px 248.2px 1.2px 0.1px #3c3c3c,409.1px 351.7px 1.2px 0.1px #383a38,189.1px 192.3px 1.2px 0.1px #383a38,298.4px 130.6px 1.2px 0.1px #403838,424.3px 376.5px 1.2px 0.1px #463c3c,194.1px 181.1px 1.2px 0.1px #463c3c,107.7px 143.4px 1.2px 0.1px #403838,252.8px 192.8px 1.2px 0.1px #524646,414.0px 141.3px 1.2px 0.1px #463c3c,303.6px 172.1px 1.2px 0.1px #343434,297.4px 208.1px 1.2px 0.1px #343434,168.0px 234.2px 1.2px 0.1px #403838,178.7px 115.1px 1.2px 0.1px #4a4040,435.3px 285.5px 1.2px 0.1px #3a3434,429.5px 108.3px 1.2px 0.1px #4a4040,291.3px 84.7px 1.2px 0.1px #3c3c3c,339.4px 241.8px 1.2px 0.1px #463c3c,117.5px 12.0px 1.2px 0.1px #343434,410.7px 17.9px 1.2px 0.1px #524646,228.6px 379.8px 1.2px 0.1px #3a3434,369.8px 65.7px 1.2px 0.1px #403838,401.4px 236.3px 1.2px 0.1px #3c3c3c,323.0px 368.1px 1.2px 0.1px #3a3434,309.9px 278.0px 1.2px 0.1px #463c3c,222.3px 122.0px 1.2px 0.1px #524646,146.2px 129.4px 1.2px 0.1px #463c3c,356.3px 8.4px 1.2px 0.1px #4a4040,293.3px 250.1px 1.2px 0.1px #3c3c3c,353.0px 300.2px 1.2px 0.1px #343434,178.5px 309.0px 1.2px 0.1px #343434,219.5px 314.1px 1.2px 0.1px #383a38,244.0px 224.9px 1.2px 0.1px #3a3434,325.8px 332.4px 1.2px 0.1px #383a38,179.2px 93.3px 1.2px 0.1px #463c3c,186.3px 314.2px 1.2px 0.1px #403838,124.8px 308.4px 1.2px 0.1px #403838,416.5px 155.3px 1.2px 0.1px #463c3c,244.9px 361.5px 1.2px 0.1px #403838,243.8px 131.8px 1.2px 0.1px #3a3434,434.5px 302.5px 1.2px 0.1px #463c3c,366.7px 167.5px 1.2px 0.1px #3a3434,132.8px 304.7px 1.2px 0.1px #343434,155.2px 282.9px 1.2px 0.1px #3c3c3c,252.3px 154.0px 1.2px 0.1px #383a38,125.5px 26.7px 1.2px 0.1px #343434,280.3px 168.3px 1.2px 0.1px #524646"></div>
<div class="a nw mono" style="left:2.25px;top:3.40px;font-size:8.33px;line-height:10px;color:#d6d6d6;-webkit-text-stroke:0.25px #d6d6d6">c.u=deg&amp;-out.form=|&amp;-out.max=50000&amp;-out.add=_RAJ,_DEJ&amp;-out=Bmag&amp;-out=Vmag&amp;-out=r'mag&amp;Vmag&amp;-out=e_Bmag</div>
<div class="a nw mono" style="left:2.25px;top:13.62px;font-size:8.33px;line-height:10px;color:#d6d6d6;-webkit-text-stroke:0.25px #d6d6d6">13507 bytes transferred (unknown size)</div>
<div class="a nw mono" style="left:2.25px;top:34.06px;font-size:8.33px;line-height:10px;color:#d6d6d6;-webkit-text-stroke:0.25px #d6d6d6">104 catalog sources found.</div>
<div class="a nw mono" style="left:2.25px;top:54.50px;font-size:8.33px;line-height:10px;color:#d6d6d6;-webkit-text-stroke:0.25px #d6d6d6">Saturation threshold: 0.6909</div>
<div class="a nw mono" style="left:2.25px;top:74.94px;font-size:8.33px;line-height:10px;color:#d6d6d6;-webkit-text-stroke:0.25px #d6d6d6">* Extracting PSF signal samples</div>
<div class="a nw mono" style="left:2.25px;top:85.16px;font-size:8.33px;line-height:10px;color:#d6d6d6;-webkit-text-stroke:0.25px #d6d6d6">Fitting 2099 stars: done</div>
<div class="a nw mono" style="left:2.25px;top:95.38px;font-size:8.33px;line-height:10px;color:#d6d6d6;-webkit-text-stroke:0.25px #d6d6d6">Fitting 3041 stars: done</div>
<div class="a nw mono" style="left:2.25px;top:105.60px;font-size:8.33px;line-height:10px;color:#d6d6d6;-webkit-text-stroke:0.25px #d6d6d6">Fitting 2538 stars: done</div>
<div class="a nw mono" style="left:2.25px;top:126.04px;font-size:8.33px;line-height:10px;color:#d6d6d6;-webkit-text-stroke:0.25px #d6d6d6">* Computing color calibration functions</div>
<div class="a nw mono" style="left:2.25px;top:146.48px;font-size:8.33px;line-height:10px;color:#d6d6d6;-webkit-text-stroke:0.25px #d6d6d6">Robust linear regression (R-G): done</div>
<div class="a nw mono" style="left:2.25px;top:156.70px;font-size:8.33px;line-height:10px;color:#d6d6d6;-webkit-text-stroke:0.25px #d6d6d6">Robust linear regression (B-G): done</div>
<div class="a nw mono" style="left:2.25px;top:177.14px;font-size:8.33px;line-height:10px;color:#d6d6d6;-webkit-text-stroke:0.25px #d6d6d6">* Color calibration functions:</div>
<div class="a nw mono" style="left:2.25px;top:187.36px;font-size:8.33px;line-height:10px;color:#d6d6d6;-webkit-text-stroke:0.25px #d6d6d6">f_R : R-G = +1.0423117*(r'- V) + 0.9935684, sigma = 0.6249867</div>
<div class="a nw mono" style="left:2.25px;top:197.58px;font-size:8.33px;line-height:10px;color:#d6d6d6;-webkit-text-stroke:0.25px #d6d6d6">f_B : B-G = +0.0381447*(B - V) + 0.2794368, sigma = 0.0582408</div>
<div class="a nw mono" style="left:2.25px;top:218.02px;font-size:8.33px;line-height:10px;color:#3fc63f;-webkit-text-stroke:0.25px #3fc63f">* White balance factors:</div>
<div class="a nw mono" style="left:2.25px;top:228.24px;font-size:8.33px;line-height:10px;color:#3fc63f;-webkit-text-stroke:0.25px #3fc63f">W_R : 1.0000</div>
<div class="a nw mono" style="left:2.25px;top:238.46px;font-size:8.33px;line-height:10px;color:#3fc63f;-webkit-text-stroke:0.25px #3fc63f">W_G : 0.4984</div>
<div class="a nw mono" style="left:2.25px;top:248.68px;font-size:8.33px;line-height:10px;color:#3fc63f;-webkit-text-stroke:0.25px #3fc63f">W_B : 0.6609</div>
<div class="a nw mono" style="left:2.25px;top:269.12px;font-size:8.33px;line-height:10px;color:#d6d6d6;-webkit-text-stroke:0.25px #d6d6d6">Applying white balance: done</div>
<div class="a nw mono" style="left:2.25px;top:289.56px;font-size:8.33px;line-height:10px;color:#d6d6d6;-webkit-text-stroke:0.25px #d6d6d6">Evaluating background reference: done</div>
<div class="a nw mono" style="left:2.25px;top:310.00px;font-size:8.33px;line-height:10px;color:#3fc63f;-webkit-text-stroke:0.25px #3fc63f">* Background reference:</div>
<div class="a nw mono" style="left:2.25px;top:320.22px;font-size:8.33px;line-height:10px;color:#3fc63f;-webkit-text-stroke:0.25px #3fc63f">B_R : 0.00142484</div>
<div class="a nw mono" style="left:2.25px;top:330.44px;font-size:8.33px;line-height:10px;color:#3fc63f;-webkit-text-stroke:0.25px #3fc63f">B_G : 0.00070615</div>
<div class="a nw mono" style="left:2.25px;top:340.66px;font-size:8.33px;line-height:10px;color:#3fc63f;-webkit-text-stroke:0.25px #3fc63f">B_B : 0.00093922</div>
<div class="a nw mono" style="left:2.25px;top:361.10px;font-size:8.33px;line-height:10px;color:#d6d6d6;-webkit-text-stroke:0.25px #d6d6d6">Applying background neutralization: done</div>
<div class="a nw mono" style="left:2.25px;top:371.32px;font-size:8.33px;line-height:10px;color:#d6d6d6;-webkit-text-stroke:0.25px #d6d6d6">21.302 s</div>
</div>
<div class="a" style="left:20px;top:480px;width:440px;height:20px;background:#c6c6c6"><div class="a nw" style="left:4.6px;top:4.5px;font-size:7.96px;color:#2a2a2a">Ready</div></div>
<!-- ghost backgrounds under dialog (main window parts) -->
<div class="a" style="left:460px;top:52px;width:135px;height:16px;background:#c9c9c9"></div>
<div class="a" style="left:460px;top:68px;width:135px;height:394px;background:#131313"></div>
<div class="a" style="left:460px;top:462px;width:135px;height:18px;background:#161616"></div>
<div class="a" style="left:460px;top:480px;width:135px;height:20px;background:#c6c6c6"></div>
<div class="a" style="left:460px;top:500px;width:135px;height:34px;background:#6a6a6a"></div>
<div class="a" style="left:595px;top:471px;width:193px;height:63px;background:#6a6a6a"></div>
<div class="a nw mono" style="left:460px;top:70.5px;font-size:8.33px;line-height:10px;color:#d6d6d6;overflow:hidden;width:135px">ag&amp;-out=e_Bmag&amp;-out=e_Vmag</div>
<div class="a nw" style="left:530px;top:483px;width:65px;height:13px;border:1px solid #909090;background:#d8d8d8;font-size:8px;color:#808080;padding-left:14px;padding-top:1.5px">Pause/Abort</div>
<div class="a" style="left:788px;top:471px;width:108px;height:63px;background:linear-gradient(90deg,#474747,#4d4d4d 30%,#4a4a4a 60%,#505050 85%,#464646)"></div>
<!-- iconized windows -->
<div class="a" style="left:749px;top:77px;width:259px;height:20px;background:rgba(40,40,40,0.5);filter:blur(2px)"></div>
<div class="a" style="left:751px;top:79px;width:255px;height:16px;background:#676765">
 <div class="a" style="left:4px;top:2px;width:12px;height:12px;background:#8a7ad8;border:1px solid #4a3a98"></div>
 <div class="a nw" style="right:38px;top:3px;font-size:9px;font-weight:bold;color:#d9d9d9">ScreenTransferFunction: integration_ABE_b...</div>
 <svg class="a" style="left:228px;top:4px" width="24" height="9" viewBox="0 0 24 9"><rect x="1.5" y="1.5" width="6" height="6" stroke="#e8e8e8" stroke-width="1.3" fill="none"/><path d="M15 1.5L21 7.5M21 1.5L15 7.5" stroke="#e8e8e8" stroke-width="1.3"/></svg>
</div>
<div class="a" style="left:809px;top:104px;width:198px;height:21px;background:rgba(40,40,40,0.5);filter:blur(2px)"></div>
<div class="a" style="left:811px;top:106.5px;width:194px;height:16px;background:#676765">
 <svg class="a" style="left:3px;top:2px" width="12" height="12" viewBox="0 0 12 12"><rect x="0.5" y="0.5" width="11" height="11" fill="#d8d020" stroke="#7a7420" stroke-width="0.6"/><path d="M2 2 Q4 8 10 10.5" stroke="#202020" stroke-width="1.6" fill="none"/></svg>
 <div class="a nw" style="left:22px;top:3px;font-size:9px;font-weight:bold;color:#d9d9d9">AutomaticBackgroundExtractor</div>
 <svg class="a" style="left:167px;top:4px" width="24" height="9" viewBox="0 0 24 9"><rect x="1.5" y="1.5" width="6" height="6" stroke="#e8e8e8" stroke-width="1.3" fill="none"/><path d="M15 1.5L21 7.5M21 1.5L15 7.5" stroke="#e8e8e8" stroke-width="1.3"/></svg>
</div>
<!-- orange guide line -->
<div class="a" style="left:896px;top:52px;width:1px;height:482px;background:#a07a48"></div>
<!-- PCC process window -->

<div class="a" style="left:538px;top:138px;width:360px;height:333px;background:#c9c5d1;border-right:1px solid #9a9a9a">
 <div class="a" style="left:0;top:0;width:360px;height:16px;background:#5f615e"><div class="a nw" style="left:0;width:360px;text-align:center;top:3px;font-size:9px;font-weight:bold;color:#e8e8e8">PhotometricColorCalibration</div><svg class="a" style="left:335px;top:3px" width="24" height="10" viewBox="0 0 24 10"><path d="M1.5 1.5H8.5M1.5 8.5H8.5" stroke="#f0f0f0" stroke-width="1"/><path d="M2.5 3L5 5.5L7.5 3Z M2.5 7L5 4.5L7.5 7Z" fill="#f0f0f0"/><path d="M15 2L21 8M21 2L15 8" stroke="#f0f0f0" stroke-width="1.4"/></svg></div>
 <div class="a" style="left:4px;top:21.5px;width:351px;height:12px;background:#adaca6"><div class="a" style="left:2px;top:0;width:65px;height:12px;background:#e8c890"></div><div class="a nw" style="left:5px;top:1.5px;font-size:8.6px;font-weight:bold;color:#2458a8">Calibration</div></div><svg class="a" style="left:342px;top:23.0px" width="9" height="9" viewBox="0 0 9 9"><path d="M0.5 4.5L4.5 0.8L8.5 4.5Z M0.5 8.5L4.5 4.8L8.5 8.5Z" fill="#1560c8"/><path d="M0.5 4.3H8.5" stroke="#1560c8" stroke-width="0.8"/></svg>
 <div class="a nw" style="left:0;top:36.5px;width:99px;text-align:right;font-size:8.6px;color:#303030">White reference:</div>
 <div class="a nw" style="left:103px;top:36px;width:104px;height:12px;background:#e4e4e4;border:1px solid #8e8e8e;font-size:8.3px;color:#404040;padding-left:3px;line-height:10px">Average Spiral Galaxy</div>
 <div class="a" style="left:103px;top:52px;width:8px;height:8px;background:#e8e8e8;border:1px solid #8a8a8a"></div><svg class="a" style="left:103px;top:51px" width="9" height="9" viewBox="0 0 9 9"><path d="M1.5 4.5L3.5 7L8 1.5" stroke="#303030" stroke-width="1.2" fill="none"/></svg><div class="a nw" style="left:115px;top:50.5px;font-size:8.6px;color:#303030">Generate graphs</div>
 <div class="a" style="left:103px;top:63px;width:8px;height:8px;background:#e8e8e8;border:1px solid #8a8a8a"></div><div class="a nw" style="left:115px;top:61.5px;font-size:8.6px;color:#303030">Generate star maps</div>
 <div class="a" style="left:103px;top:75px;width:8px;height:8px;background:#e8e8e8;border:1px solid #8a8a8a"></div><div class="a nw" style="left:115px;top:73.5px;font-size:8.6px;color:#303030">Generate text files</div>
 <div class="a nw" style="left:0;top:86.5px;width:99px;text-align:right;font-size:8.6px;color:#303030">Output directory:</div>
 <div class="a nw" style="left:103px;top:86.5px;width:236px;height:12.0px;background:#c8c8c8;border:1px solid #8e8e8e;font-size:8.3px;color:#404040;padding-left:3px;line-height:10.0px">&lt;system-tmp-dir&gt;</div>
 <svg class="a" style="left:344px;top:88px" width="9" height="8" viewBox="0 0 9 8"><path d="M0.5 1H3.5L4.5 2H8.5V7.5H0.5Z" fill="#6a6a6a"/></svg>
 <div class="a" style="left:103px;top:101px;width:8px;height:8px;background:#e8e8e8;border:1px solid #8a8a8a"></div><svg class="a" style="left:103px;top:100px" width="9" height="9" viewBox="0 0 9 9"><path d="M1.5 4.5L3.5 7L8 1.5" stroke="#303030" stroke-width="1.2" fill="none"/></svg><div class="a nw" style="left:115px;top:99.5px;font-size:8.6px;color:#303030">Apply color calibration</div>
 <div class="a" style="left:4px;top:113px;width:351px;height:12px;background:#adaca6"><div class="a" style="left:2px;top:0;width:80px;height:12px;background:#e8c890"></div><div class="a nw" style="left:5px;top:1.5px;font-size:8.6px;font-weight:bold;color:#2458a8">Catalog Search</div></div><svg class="a" style="left:342px;top:114.5px" width="9" height="9" viewBox="0 0 9 9"><path d="M0.5 4.5L4.5 0.8L8.5 4.5Z M0.5 8.5L4.5 4.8L8.5 8.5Z" fill="#1560c8"/><path d="M0.5 4.3H8.5" stroke="#1560c8" stroke-width="0.8"/></svg>
 <div class="a" style="left:103px;top:128px;width:8px;height:8px;background:#e8e8e8;border:1px solid #8a8a8a"></div><svg class="a" style="left:103px;top:127px" width="9" height="9" viewBox="0 0 9 9"><path d="M1.5 4.5L3.5 7L8 1.5" stroke="#303030" stroke-width="1.2" fill="none"/></svg><div class="a nw" style="left:115px;top:126.5px;font-size:8.6px;color:#303030">Automatic catalog</div>
 <div class="a nw" style="left:0;top:139.5px;width:99px;text-align:right;font-size:8.6px;color:#303030">Catalog:</div>
 <div class="a nw" style="left:103px;top:139px;width:94px;height:12px;background:#e4e4e4;border:1px solid #8e8e8e;font-size:8.3px;color:#404040;padding-left:3px;line-height:10px">APASS DR9 (VizieR)</div>
 <div class="a nw" style="left:0;top:155.5px;width:99px;text-align:right;font-size:8.6px;color:#303030">VizieR server:</div>
 <div class="a nw" style="left:103px;top:155px;width:129px;height:12px;background:#e4e4e4;border:1px solid #8e8e8e;font-size:8.3px;color:#404040;padding-left:3px;line-height:10px">CDS Strasbourg, France</div>
 <div class="a" style="left:103px;top:170px;width:8px;height:8px;background:#e8e8e8;border:1px solid #8a8a8a"></div><svg class="a" style="left:103px;top:169px" width="9" height="9" viewBox="0 0 9 9"><path d="M1.5 4.5L3.5 7L8 1.5" stroke="#303030" stroke-width="1.2" fill="none"/></svg><div class="a nw" style="left:115px;top:168.5px;font-size:8.6px;color:#303030">Automatic limit magnitude</div>
 <div class="a nw" style="left:0;top:181.5px;width:99px;text-align:right;font-size:8.6px;color:#303030">Limit magnitude:</div>
 <div class="a nw" style="left:103px;top:181px;width:37px;height:12px;background:#e4e4e4;border:1px solid #8e8e8e;font-size:8.3px;color:#404040;padding-left:3px;line-height:10px">12.0</div>
 <div class="a" style="left:4px;top:197px;width:351px;height:12px;background:#adaca6"><div class="a" style="left:2px;top:0;width:95px;height:12px;background:#e8c890"></div><div class="a nw" style="left:5px;top:1.5px;font-size:8.6px;font-weight:bold;color:#2458a8">Signal Evaluation</div></div><svg class="a" style="left:342px;top:198.5px" width="9" height="9" viewBox="0 0 9 9"><path d="M0.5 0.5L4.5 4.2L8.5 0.5Z M0.5 4.5L4.5 8.2L8.5 4.5Z" fill="#1560c8"/><path d="M0.5 0.6H8.5" stroke="#1560c8" stroke-width="0.8"/></svg>
 <div class="a" style="left:4px;top:211.5px;width:351px;height:12px;background:#adaca6"><div class="a" style="left:2px;top:0;width:135px;height:12px;background:#e8c890"></div><div class="a" style="left:6px;top:2px;width:8px;height:8px;border:1px solid #707070;background:#eee"></div><div class="a nw" style="left:18px;top:1.5px;font-size:8.6px;font-weight:bold;color:#2458a8">Background Neutralization</div></div><svg class="a" style="left:342px;top:213.0px" width="9" height="9" viewBox="0 0 9 9"><path d="M0.5 4.5L4.5 0.8L8.5 4.5Z M0.5 8.5L4.5 4.8L8.5 8.5Z" fill="#1560c8"/><path d="M0.5 4.3H8.5" stroke="#1560c8" stroke-width="0.8"/></svg>
 <div class="a nw" style="left:0;top:226.5px;width:99px;text-align:right;font-size:8.6px;color:#303030">Lower limit:</div>
 <div class="a nw" style="left:103px;top:226px;width:32px;height:12px;background:#e4e4e4;border:1px solid #8e8e8e;font-size:8.3px;color:#404040;padding-left:3px;line-height:10px">-2.80</div>
 <div class="a" style="left:140px;top:231px;width:214px;height:4px;background:#e0e0e0;border:1px solid #909090;border-radius:2px"></div>
 <div class="a nw" style="left:0;top:242.5px;width:99px;text-align:right;font-size:8.6px;color:#303030">Upper limit:</div>
 <div class="a nw" style="left:103px;top:242px;width:32px;height:12px;background:#e4e4e4;border:1px solid #8e8e8e;font-size:8.3px;color:#404040;padding-left:3px;line-height:10px">0</div>
 <div class="a" style="left:140px;top:246px;width:214px;height:4px;background:#e0e0e0;border:1px solid #909090;border-radius:2px"></div>
 <div class="a" style="left:262px;top:242.5px;width:9px;height:9px;border-radius:50%;background:#d4d4d4;border:1px solid #8c8c8c"></div>
 <div class="a" style="left:14px;top:262px;width:341px;height:50.5px;border:1px solid #8c8c8c"></div>
 <div class="a" style="left:18px;top:257px;width:8px;height:8px;background:#e8e8e8;border:1px solid #8a8a8a"></div><div class="a nw" style="left:32px;top:255px;font-size:8.6px;font-weight:bold;color:#303030;background:#c7c5cc;padding:0 2px">Region of Interest</div>
 <div class="a nw" style="left:0;top:277.5px;width:99px;text-align:right;font-size:8.6px;color:#303030">Left:</div>
 <div class="a nw" style="left:103px;top:276px;width:70px;height:14px;background:#cacaca;border:1px solid #8e8e8e;font-size:8.3px;color:#404040;padding-left:3px;line-height:12px">0</div>
 <div class="a nw" style="left:190px;top:277.5px;font-size:8.6px;color:#303030">Top:</div>
 <div class="a nw" style="left:206px;top:276px;width:67px;height:14px;background:#cacaca;border:1px solid #8e8e8e;font-size:8.3px;color:#404040;padding-left:3px;line-height:12px">0</div>
 <div class="a nw" style="left:0;top:295.5px;width:99px;text-align:right;font-size:8.6px;color:#303030">Width:</div>
 <div class="a nw" style="left:103px;top:294px;width:70px;height:14px;background:#cacaca;border:1px solid #8e8e8e;font-size:8.3px;color:#404040;padding-left:3px;line-height:12px">0</div>
 <div class="a nw" style="left:177px;top:295.5px;font-size:8.6px;color:#303030">Height:</div>
 <div class="a nw" style="left:206px;top:294px;width:67px;height:14px;background:#cacaca;border:1px solid #8e8e8e;font-size:8.3px;color:#404040;padding-left:3px;line-height:12px">0</div>
 <svg class="a" style="left:264px;top:277px" width="9" height="28" viewBox="0 0 9 28"><path d="M1 4.5L4.5 1.5L8 4.5Z M1 8.5L4.5 11.5L8 8.5Z M1 22.5L4.5 19.5L8 22.5Z M1 26.5L4.5 29.5L8 26.5Z" fill="#8a8a8a"/></svg>
 <div class="a" style="left:282.5px;top:294px;width:67.5px;height:13px;background:#c4c4c4;border:1px solid #8a8a8a;border-radius:1px"><div class="a nw" style="left:0;width:66px;text-align:center;top:1.5px;font-size:8.5px;color:#8a8a8a">From Preview</div></div>
 <div class="a" style="left:0;top:318px;width:360px;height:15px;background:#b9b7b1"></div>
 <svg class="a" style="left:312px;top:320px" width="46" height="11" viewBox="0 0 46 11"><rect x="1.5" y="1.5" width="8" height="8" stroke="#2060c0" fill="none" stroke-width="1.2"/><path d="M17.5 1.5H22.5L25.5 4.5V9.5H17.5Z" stroke="#2060c0" fill="none" stroke-width="1.2"/><path d="M35 2.5L43 9M43 2.5L35 9" stroke="#2060c0" stroke-width="1.3"/><path d="M34 1.5V4M34 1.5H36.5M44 9.5V7M44 9.5H41.5M44 1.5V4M44 1.5H41.5M34 9.5V7M34 9.5H36.5" stroke="#2060c0" stroke-width="1.3"/></svg>
</div>
<!-- bottom status bar -->
<div class="a" style="left:0;top:534px;width:1024px;height:21px;background:#f3eff3;border-top:1px solid #d8d4d8">
 <svg class="a" style="left:4px;top:3px" width="4" height="14" viewBox="0 0 4 14"><circle cx="0.8" cy="0.8" r="0.75" fill="#7c7c7c"/><circle cx="3.2" cy="0.8" r="0.75" fill="#7c7c7c"/><circle cx="2" cy="2.1" r="0.8" fill="#a8a8a8"/><circle cx="0.8" cy="3.4" r="0.75" fill="#7c7c7c"/><circle cx="3.2" cy="3.4" r="0.75" fill="#7c7c7c"/><circle cx="2" cy="4.7" r="0.8" fill="#a8a8a8"/><circle cx="0.8" cy="6.0" r="0.75" fill="#7c7c7c"/><circle cx="3.2" cy="6.0" r="0.75" fill="#7c7c7c"/><circle cx="2" cy="7.3" r="0.8" fill="#a8a8a8"/><circle cx="0.8" cy="8.6" r="0.75" fill="#7c7c7c"/><circle cx="3.2" cy="8.6" r="0.75" fill="#7c7c7c"/><circle cx="2" cy="9.9" r="0.8" fill="#a8a8a8"/><circle cx="0.8" cy="11.2" r="0.75" fill="#7c7c7c"/><circle cx="3.2" cy="11.2" r="0.75" fill="#7c7c7c"/><circle cx="2" cy="12.5" r="0.8" fill="#a8a8a8"/><circle cx="0.8" cy="13.8" r="0.75" fill="#7c7c7c"/><circle cx="3.2" cy="13.8" r="0.75" fill="#7c7c7c"/></svg>
 <div class="a" style="left:13px;top:4px;width:176px;height:12.5px;background:linear-gradient(#fbfbfb,#e6e6e6);border:1px solid #b0b0b0;border-radius:2px">
  <svg class="a" style="left:5px;top:1.5px" width="9" height="9" viewBox="0 0 9 9"><rect x="0.8" y="0.8" width="7.4" height="7.4" fill="none" stroke="#4a4a4a" stroke-width="1.2"/><path d="M0.8 2.5H8.2" stroke="#4a4a4a" stroke-width="1.5"/></svg>
  <div class="a nw mono" style="left:17px;top:1.5px;font-size:7px;color:#2a2a2a">integration_clone</div>
  <div class="a" style="left:161px;top:0;width:1px;height:11px;background:#c8c8c8"></div>
  <svg class="a" style="left:165px;top:4px" width="8" height="5" viewBox="0 0 8 5"><path d="M0.5 0.5H7.5L4 4.5Z" fill="#222"/></svg>
 </div>
 <div class="a" style="left:191.5px;top:4px;width:12.5px;height:12.5px;background:#fafafa;border:1px solid #9a9a9a"><svg class="a" style="left:1.5px;top:1.5px" width="8" height="8" viewBox="0 0 8 8"><path d="M2.5 1H7V7H1V3Z" fill="#fff" stroke="#404040" stroke-width="1"/><path d="M1 3V7H2.5V1" fill="#505050"/></svg></div>
 <svg class="a" style="left:212px;top:3px" width="4" height="14" viewBox="0 0 4 14"><circle cx="0.8" cy="0.8" r="0.75" fill="#7c7c7c"/><circle cx="3.2" cy="0.8" r="0.75" fill="#7c7c7c"/><circle cx="2" cy="2.1" r="0.8" fill="#a8a8a8"/><circle cx="0.8" cy="3.4" r="0.75" fill="#7c7c7c"/><circle cx="3.2" cy="3.4" r="0.75" fill="#7c7c7c"/><circle cx="2" cy="4.7" r="0.8" fill="#a8a8a8"/><circle cx="0.8" cy="6.0" r="0.75" fill="#7c7c7c"/><circle cx="3.2" cy="6.0" r="0.75" fill="#7c7c7c"/><circle cx="2" cy="7.3" r="0.8" fill="#a8a8a8"/><circle cx="0.8" cy="8.6" r="0.75" fill="#7c7c7c"/><circle cx="3.2" cy="8.6" r="0.75" fill="#7c7c7c"/><circle cx="2" cy="9.9" r="0.8" fill="#a8a8a8"/><circle cx="0.8" cy="11.2" r="0.75" fill="#7c7c7c"/><circle cx="3.2" cy="11.2" r="0.75" fill="#7c7c7c"/><circle cx="2" cy="12.5" r="0.8" fill="#a8a8a8"/><circle cx="0.8" cy="13.8" r="0.75" fill="#7c7c7c"/><circle cx="3.2" cy="13.8" r="0.75" fill="#7c7c7c"/></svg>
 <div class="a" style="left:221px;top:5px;width:11.5px;height:11.5px;background:#f8b060;border:1px solid #c08040"></div>
 <div class="a" style="left:230px;top:5px;width:3px;height:3px;background:#18a018"></div>
 <div class="a" style="left:230px;top:13.5px;width:3px;height:3px;background:#18a018"></div>
 <div class="a" style="left:235.5px;top:5px;width:12px;height:11.5px;border:1px solid #c4c4c4;background:#f7f5f7"></div>
 <div class="a" style="left:250px;top:5px;width:12px;height:11.5px;border:1px solid #c4c4c4;background:#f7f5f7"></div>
 <div class="a" style="left:265px;top:5px;width:12px;height:11.5px;border:1px solid #c4c4c4;background:#f7f5f7"></div>
 <svg class="a" style="left:283px;top:3px" width="4" height="14" viewBox="0 0 4 14"><circle cx="0.8" cy="0.8" r="0.75" fill="#7c7c7c"/><circle cx="3.2" cy="0.8" r="0.75" fill="#7c7c7c"/><circle cx="2" cy="2.1" r="0.8" fill="#a8a8a8"/><circle cx="0.8" cy="3.4" r="0.75" fill="#7c7c7c"/><circle cx="3.2" cy="3.4" r="0.75" fill="#7c7c7c"/><circle cx="2" cy="4.7" r="0.8" fill="#a8a8a8"/><circle cx="0.8" cy="6.0" r="0.75" fill="#7c7c7c"/><circle cx="3.2" cy="6.0" r="0.75" fill="#7c7c7c"/><circle cx="2" cy="7.3" r="0.8" fill="#a8a8a8"/><circle cx="0.8" cy="8.6" r="0.75" fill="#7c7c7c"/><circle cx="3.2" cy="8.6" r="0.75" fill="#7c7c7c"/><circle cx="2" cy="9.9" r="0.8" fill="#a8a8a8"/><circle cx="0.8" cy="11.2" r="0.75" fill="#7c7c7c"/><circle cx="3.2" cy="11.2" r="0.75" fill="#7c7c7c"/><circle cx="2" cy="12.5" r="0.8" fill="#a8a8a8"/><circle cx="0.8" cy="13.8" r="0.75" fill="#7c7c7c"/><circle cx="3.2" cy="13.8" r="0.75" fill="#7c7c7c"/></svg>
 <svg class="a" style="left:407px;top:3px" width="4" height="14" viewBox="0 0 4 14"><circle cx="0.8" cy="0.8" r="0.75" fill="#7c7c7c"/><circle cx="3.2" cy="0.8" r="0.75" fill="#7c7c7c"/><circle cx="2" cy="2.1" r="0.8" fill="#a8a8a8"/><circle cx="0.8" cy="3.4" r="0.75" fill="#7c7c7c"/><circle cx="3.2" cy="3.4" r="0.75" fill="#7c7c7c"/><circle cx="2" cy="4.7" r="0.8" fill="#a8a8a8"/><circle cx="0.8" cy="6.0" r="0.75" fill="#7c7c7c"/><circle cx="3.2" cy="6.0" r="0.75" fill="#7c7c7c"/><circle cx="2" cy="7.3" r="0.8" fill="#a8a8a8"/><circle cx="0.8" cy="8.6" r="0.75" fill="#7c7c7c"/><circle cx="3.2" cy="8.6" r="0.75" fill="#7c7c7c"/><circle cx="2" cy="9.9" r="0.8" fill="#a8a8a8"/><circle cx="0.8" cy="11.2" r="0.75" fill="#7c7c7c"/><circle cx="3.2" cy="11.2" r="0.75" fill="#7c7c7c"/><circle cx="2" cy="12.5" r="0.8" fill="#a8a8a8"/><circle cx="0.8" cy="13.8" r="0.75" fill="#7c7c7c"/><circle cx="3.2" cy="13.8" r="0.75" fill="#7c7c7c"/></svg>
 <svg class="a" style="left:619px;top:4px" width="13" height="13" viewBox="0 0 13 13"><path d="M6.5 1V12M1 6.5H12" stroke="#c8c8c8" stroke-width="1"/><circle cx="6.5" cy="6.5" r="2.5" fill="none" stroke="#c8c8c8"/></svg>
 <svg class="a" style="left:640px;top:3px" width="4" height="14" viewBox="0 0 4 14"><circle cx="0.8" cy="0.8" r="0.75" fill="#7c7c7c"/><circle cx="3.2" cy="0.8" r="0.75" fill="#7c7c7c"/><circle cx="2" cy="2.1" r="0.8" fill="#a8a8a8"/><circle cx="0.8" cy="3.4" r="0.75" fill="#7c7c7c"/><circle cx="3.2" cy="3.4" r="0.75" fill="#7c7c7c"/><circle cx="2" cy="4.7" r="0.8" fill="#a8a8a8"/><circle cx="0.8" cy="6.0" r="0.75" fill="#7c7c7c"/><circle cx="3.2" cy="6.0" r="0.75" fill="#7c7c7c"/><circle cx="2" cy="7.3" r="0.8" fill="#a8a8a8"/><circle cx="0.8" cy="8.6" r="0.75" fill="#7c7c7c"/><circle cx="3.2" cy="8.6" r="0.75" fill="#7c7c7c"/><circle cx="2" cy="9.9" r="0.8" fill="#a8a8a8"/><circle cx="0.8" cy="11.2" r="0.75" fill="#7c7c7c"/><circle cx="3.2" cy="11.2" r="0.75" fill="#7c7c7c"/><circle cx="2" cy="12.5" r="0.8" fill="#a8a8a8"/><circle cx="0.8" cy="13.8" r="0.75" fill="#7c7c7c"/><circle cx="3.2" cy="13.8" r="0.75" fill="#7c7c7c"/></svg>
 <div class="a nw mono" style="left:700px;top:5.5px;font-size:7px;color:#2e2e2e">w:4144 · h:2822 · n:3 · f32 · RGB · 133.831 MiB · Modified</div>
</div>
<!-- taskbar -->
<div class="a" style="left:0;top:555px;width:1024px;height:21px;background:#0a0a0a">
 <svg class="a" style="left:1px;top:3px" width="14" height="14" viewBox="0 0 14 14"><path d="M2 3 Q6 0 11 2 Q8 3 9 6 Q12 9 8 12 Q5 13 3 11 Q6 10 6 8 Q3 8 2 5 Z" fill="none" stroke="#d0d0d0" stroke-width="1.1"/><path d="M3 4L6 6" stroke="#d0d0d0"/></svg>
 <div class="a" style="left:19px;top:5px;width:13px;height:10px;background:#4a90e0;border-radius:1px"></div>
 <div class="a" style="left:35px;top:0;width:15px;height:20.5px;background:#6a0c0c"></div>
 <div class="a nw" style="left:38.5px;top:4.5px;font-size:10.5px;font-weight:bold;color:#e8e8e8">1</div>
 <div class="a nw" style="left:55px;top:4.5px;font-size:10.5px;font-weight:bold;color:#d8d8d8">2</div>
 <svg class="a" style="left:70px;top:3px" width="13" height="13" viewBox="0 0 13 13"><rect x="1" y="1" width="11" height="2" fill="#50a8f0"/><rect x="1" y="2.5" width="11" height="1.5" fill="#f0d040"/><rect x="1" y="4" width="11" height="8.5" fill="#8a8a8a"/><rect x="5" y="7" width="3" height="1" fill="#ddd"/></svg>
 <svg class="a" style="left:89px;top:3px" width="13" height="13" viewBox="0 0 13 13"><rect x="0.5" y="1" width="12" height="11" fill="#3a3a3a" rx="1"/><path d="M2.5 3.5L5 5.5L2.5 7.5" stroke="#eee" fill="none" stroke-width="1"/><path d="M6 8.5H10" stroke="#eee"/></svg>
 <svg class="a" style="left:109px;top:3px" width="13" height="13" viewBox="0 0 13 13"><rect x="0.5" y="0.5" width="12" height="12" fill="#e8e8e8"/><path d="M3 11 Q4 4 11 2 Q10 8 3 11Z" fill="#4a80c0"/></svg>
 <svg class="a" style="left:131px;top:4px" width="14" height="12" viewBox="0 0 14 12"><path d="M0.5 1H5L6 2.5H13.5V11.5H0.5Z" fill="#4a90e0"/><rect x="0.5" y="3.5" width="13" height="1" fill="#a8d0f8"/></svg>
 <div class="a nw" style="left:146px;top:3.5px;font-size:10.6px;color:#e4e4e4">canon70-200-IC4...</div>
 <svg class="a" style="left:248px;top:3px" width="14" height="14" viewBox="0 0 14 14"><circle cx="7" cy="7.5" r="6" fill="#ff7a20"/><circle cx="7.3" cy="7.8" r="3.2" fill="#7a3ac8"/><path d="M3 3 Q7 0 11 3 Q8 2.5 7 4.5" fill="#ffcf30"/></svg>
 <div class="a nw" style="left:263px;top:3.5px;font-size:10.6px;color:#e4e4e4">Safata d'entrada ...</div>
 <svg class="a" style="left:365px;top:3px" width="13" height="13" viewBox="0 0 13 13"><rect x="0.5" y="0.5" width="12" height="12" fill="#e8e8e8"/><path d="M3 11 Q4 4 11 2 Q10 8 3 11Z" fill="#4a80c0"/></svg>
 <div class="a nw" style="left:380px;top:3.5px;font-size:10.6px;color:#e4e4e4">*Sense títol</div>
 <div class="a" style="left:479px;top:0;width:114px;height:1px;background:#5a0a0a"></div>
 <svg class="a" style="left:482px;top:3px" width="13" height="13" viewBox="0 0 13 13"><rect x="0.5" y="1" width="12" height="11" fill="#3a3a3a" rx="1"/><path d="M2.5 3.5L5 5.5L2.5 7.5" stroke="#eee" fill="none" stroke-width="1"/><path d="M6 8.5H10" stroke="#eee"/></svg>
 <div class="a nw" style="left:497px;top:3.5px;font-size:10.6px;color:#e4e4e4">joan@thinkpad: ...</div>
 <svg class="a" style="left:599px;top:4px" width="14" height="12" viewBox="0 0 14 12"><path d="M0.5 1H5L6 2.5H13.5V11.5H0.5Z" fill="#4a90e0"/><rect x="0.5" y="3.5" width="13" height="1" fill="#a8d0f8"/></svg>
 <div class="a nw" style="left:614px;top:3.5px;font-size:10.6px;color:#e4e4e4">Flats</div>
 <svg class="a" style="left:717px;top:3px" width="14" height="15" viewBox="0 0 14 15"><path d="M7 0.5L13 5L7 14.5L1 5Z" fill="#3040f0"/><path d="M7 0.5L13 5H1Z" fill="#8090ff"/><path d="M7 5L7 14.5L1 5Z" fill="#5060ff"/></svg>
 <div class="a nw" style="left:732px;top:3.5px;font-size:10.6px;color:#e4e4e4">PixInsight</div>
 <div class="a nw" style="left:832px;top:3.5px;font-size:10.5px;font-weight:bold;color:#3a3a3a;letter-spacing:2.6px">MNDES</div><div class="a nw" style="left:829px;top:3.5px;font-size:10.5px;font-weight:bold;color:#d0d0d0;letter-spacing:2.6px">MNDES</div>
 <svg class="a" style="left:889px;top:3px" width="14" height="14" viewBox="0 0 14 14"><path d="M5 1L9 5L5 9L1 5Z" fill="#5a5a5a"/><path d="M9 5L13 9L9 13L5 9Z" fill="#6a6a6a"/><path d="M10 11L13 14M13 11L10 14" stroke="#ddd"/></svg>
 <svg class="a" style="left:906px;top:3px" width="12" height="13" viewBox="0 0 12 13"><path d="M6 1 Q10 1 10 6 V9 L11.5 10.5 H0.5 L2 9 V6 Q2 1 6 1Z" fill="#e8e8e8"/><circle cx="6" cy="11.5" r="1.2" fill="#e8e8e8"/></svg>
 <svg class="a" style="left:923px;top:2px" width="16" height="17" viewBox="0 0 16 17"><path d="M8 1L14 6L8 14L2 6Z" fill="#3a50f0"/><path d="M8 1L14 6H2Z" fill="#9aa8ff"/><circle cx="12" cy="13" r="3" fill="#20a040"/><path d="M12 11.3V14.7M10.3 13H13.7" stroke="#fff"/></svg>
 <div class="a" style="left:945px;top:3px;width:11px;height:13px;background:#9a9a9a"><svg class="a" style="left:2px;top:3px" width="7" height="5" viewBox="0 0 7 5"><path d="M0.5 4.5H6.5L3.5 0.5Z" fill="#404040"/></svg></div>
 <svg class="a" style="left:959px;top:3px" width="16" height="15" viewBox="0 0 16 15"><circle cx="8" cy="7.5" r="7" fill="#e02020"/><rect x="7" y="3" width="2" height="6" fill="#fff"/><rect x="7" y="10" width="2" height="2" fill="#fff"/></svg>
 <div class="a nw" style="left:980px;top:3.5px;font-size:11px;color:#e4e4e4">7:26</div>
 <svg class="a" style="left:1006px;top:3px" width="15" height="15" viewBox="0 0 15 15"><circle cx="7.5" cy="7.5" r="7" fill="#e82a2a"/><path d="M5 4.5 A4 4 0 1 0 10 4.5" stroke="#fff" stroke-width="1.4" fill="none"/><path d="M7.5 2.5V7.5" stroke="#fff" stroke-width="1.4"/></svg>
</div>
<div id="dlg" class="a" style="left:459px;top:0;width:329.5px;height:556px;opacity:0.93">
<div class="a" style="left:0;top:0;width:329.5px;height:556px;background:#fffbff;border-left:2px solid #5263b3;border-right:2px solid #5263b3"></div>
<div class="a" style="left:0;top:0;width:329.5px;height:16.5px;background:#5263b3;border-top:1px solid #3c4a90"></div>
<svg class="a" style="left:4.3px;top:3.8px" width="11" height="11" viewBox="0 0 11 11"><rect width="11" height="11" fill="#101010"/><text x="1" y="4.6" font-size="4.2" font-weight="bold" fill="#fff" font-family="Liberation Sans">PI</text><path d="M1 10 Q3 4 5 9" stroke="#2a6af0" stroke-width="1.3" fill="none"/><path d="M3 10 Q5.5 5 8 10" stroke="#20c040" stroke-width="1.3" fill="none"/><path d="M6 9 Q8 4 10 10" stroke="#e02020" stroke-width="1.3" fill="none"/></svg>
<div class="a nw" style="left:97.5px;top:3px;font-size:9px;font-weight:bold;color:#ffffff">PhotometricColorCalibration</div>
<svg class="a" style="left:302.5px;top:3px" width="26" height="11" viewBox="0 0 26 11"><path d="M1.5 1.5H8.5M1.5 9.5H8.5" stroke="#fff" stroke-width="1.2"/><path d="M2.5 3L5 5.5L7.5 3Z M2.5 8L5 5.5L7.5 8Z" fill="#fff"/><path d="M15 1.5L22 8.5M22 1.5L15 8.5" stroke="#fff" stroke-width="1.5"/></svg>
<div class="a" style="left:2px;top:16.5px;width:325.5px;height:21px;background:#e5e1e5"></div>
<svg class="a" style="left:274px;top:21px" width="11" height="11" viewBox="0 0 11 11"><path d="M2 0.5H8L10.5 3V10.5H2Z" fill="#f4f8fc" stroke="#98a8b8" stroke-width="0.8"/><path d="M0.5 9 Q4 7 5 2 Q5.5 6 10 8 Q5 7.5 0.5 9Z" fill="none" stroke="#e03030" stroke-width="0.9"/></svg>
<svg class="a" style="left:293px;top:21.5px" width="12" height="11" viewBox="0 0 12 11"><rect x="0.7" y="0.7" width="10.6" height="9.6" fill="#fff" stroke="#888" stroke-width="0.9" rx="1"/><rect x="0.7" y="0.7" width="10.6" height="1.8" fill="#2a6ad0"/><rect x="2" y="3.5" width="8" height="5.5" fill="#8ab0e0"/></svg>
<svg class="a" style="left:312.5px;top:21px" width="11" height="11" viewBox="0 0 11 11"><circle cx="5.5" cy="5.5" r="5.2" fill="#1060c0"/><path d="M3.6 4.2 Q3.6 2.3 5.5 2.3 Q7.4 2.3 7.4 4 Q7.4 5 6 5.6 V6.6" stroke="#fff" stroke-width="1.3" fill="none"/><rect x="5.3" y="7.6" width="1.4" height="1.4" fill="#fff"/></svg>
<div class="a nw" style="left:10.7px;top:47.3px;font-size:11.3px;color:#3f8ff2">White Balance Functions</div>
<div class="a nw mono" style="left:10.8px;top:67.10px;font-size:7px;letter-spacing:-0.35px;line-height:8px;color:#1a1a1a;-webkit-text-stroke:0.12px #1a1a1a">Image ................... integration_clone</div>
<div class="a nw mono" style="left:10.8px;top:74.80px;font-size:7px;letter-spacing:-0.35px;line-height:8px;color:#1a1a1a;-webkit-text-stroke:0.12px #1a1a1a">Catalog ................. APASS DR9 (VizieR)</div>
<div class="a nw mono" style="left:10.8px;top:82.50px;font-size:7px;letter-spacing:-0.35px;line-height:8px;color:#1a1a1a;-webkit-text-stroke:0.12px #1a1a1a">Red filter .............. Sloan r&#39;</div>
<div class="a nw mono" style="left:10.8px;top:90.20px;font-size:7px;letter-spacing:-0.35px;line-height:8px;color:#1a1a1a;-webkit-text-stroke:0.12px #1a1a1a">Green filter ............ Johnson V</div>
<div class="a nw mono" style="left:10.8px;top:97.90px;font-size:7px;letter-spacing:-0.35px;line-height:8px;color:#1a1a1a;-webkit-text-stroke:0.12px #1a1a1a">Blue filter ............. Johnson B</div>
<div class="a nw mono" style="left:10.8px;top:105.60px;font-size:7px;letter-spacing:-0.35px;line-height:8px;color:#1a1a1a;-webkit-text-stroke:0.12px #1a1a1a">QE curve ................ n/a</div>
<div class="a nw mono" style="left:10.8px;top:113.30px;font-size:7px;letter-spacing:-0.35px;line-height:8px;color:#1a1a1a;-webkit-text-stroke:0.12px #1a1a1a">White reference ......... Average Spiral Galaxy</div>
<div class="a nw mono" style="left:10.8px;top:121.00px;font-size:7px;letter-spacing:-0.35px;line-height:8px;color:#1a1a1a;-webkit-text-stroke:0.12px #1a1a1a">Total sources ........... 102</div>
<div class="a nw mono" style="left:10.8px;top:128.70px;font-size:7px;letter-spacing:-0.35px;line-height:8px;color:#1a1a1a;-webkit-text-stroke:0.12px #1a1a1a">R-G linear fit .......... y = +1.042312·x + 0.993568, σ = 0.624987</div>
<div class="a nw mono" style="left:10.8px;top:136.40px;font-size:7px;letter-spacing:-0.35px;line-height:8px;color:#1a1a1a;-webkit-text-stroke:0.12px #1a1a1a">R-G white point ......... x = -0.227770, y = 0.756161</div>
<div class="a nw mono" style="left:10.8px;top:144.10px;font-size:7px;letter-spacing:-0.35px;line-height:8px;color:#1a1a1a;-webkit-text-stroke:0.12px #1a1a1a">B-G linear fit .......... y = +0.038145·x + 0.279437, σ = 0.058241</div>
<div class="a nw mono" style="left:10.8px;top:151.80px;font-size:7px;letter-spacing:-0.35px;line-height:8px;color:#1a1a1a;-webkit-text-stroke:0.12px #1a1a1a">B-G white point ......... x = 0.710260, y = 0.306529</div>
<div class="a nw mono" style="left:10.8px;top:159.50px;font-size:7px;letter-spacing:-0.35px;line-height:8px;color:#1a1a1a;-webkit-text-stroke:0.12px #1a1a1a">White balance factors ... 1.0000 0.4984 0.6609</div>
<div class="a nw mono" style="left:10.8px;top:167.20px;font-size:7px;letter-spacing:-0.35px;line-height:8px;color:#1a1a1a;-webkit-text-stroke:0.12px #1a1a1a">Date processed .......... 2025-12-10 06:26:19 UTC</div>
<svg class="a" style="left:0;top:0" width="329.5" height="556" viewBox="459 0 329.5 556">
<line x1="505.6" y1="353.5" x2="774.4" y2="353.5" stroke="#dcdcdc" stroke-width="1"/>
<line x1="505.6" y1="325.5" x2="774.4" y2="325.5" stroke="#dcdcdc" stroke-width="1"/>
<line x1="505.6" y1="297.5" x2="774.4" y2="297.5" stroke="#dcdcdc" stroke-width="1"/>
<line x1="505.6" y1="268.5" x2="774.4" y2="268.5" stroke="#dcdcdc" stroke-width="1"/>
<line x1="505.6" y1="240.5" x2="774.4" y2="240.5" stroke="#dcdcdc" stroke-width="1"/>
<line x1="505.6" y1="212.5" x2="774.4" y2="212.5" stroke="#dcdcdc" stroke-width="1"/>
<line x1="554.5" y1="184.8" x2="554.5" y2="369" stroke="#b8b8b8" stroke-width="1"/>
<line x1="643.5" y1="184.8" x2="643.5" y2="369" stroke="#b8b8b8" stroke-width="1"/>
<line x1="733.5" y1="184.8" x2="733.5" y2="369" stroke="#b8b8b8" stroke-width="1"/>
<line x1="505.6" y1="184.8" x2="505.6" y2="369" stroke="#9c9c9c" stroke-width="1.4"/>
<line x1="505.6" y1="369.5" x2="774.4" y2="369.5" stroke="#a0a0a0" stroke-width="1.1"/>
<line x1="631.3" y1="184.8" x2="631.3" y2="369" stroke="#6a6a6a" stroke-width="1.8"/>
<line x1="505.6" y1="247.2" x2="774.4" y2="247.2" stroke="#7c7c7c" stroke-width="1.4"/>
<circle cx="631.3" cy="247.2" r="3.6" fill="none" stroke="#383838" stroke-width="1"/>
<circle cx="528.7" cy="276.1" r="1.15" fill="#139a1c"/>
<circle cx="541.7" cy="278.3" r="1.15" fill="#139a1c"/>
<circle cx="546.9" cy="275.5" r="1.15" fill="#139a1c"/>
<circle cx="550.9" cy="279.0" r="1.15" fill="#139a1c"/>
<circle cx="559.9" cy="276.0" r="1.15" fill="#139a1c"/>
<circle cx="562.9" cy="264.4" r="1.15" fill="#139a1c"/>
<circle cx="568.6" cy="279.5" r="1.15" fill="#139a1c"/>
<circle cx="577.8" cy="270.8" r="1.15" fill="#139a1c"/>
<circle cx="581.6" cy="257.6" r="1.15" fill="#139a1c"/>
<circle cx="584.2" cy="257.6" r="1.15" fill="#139a1c"/>
<circle cx="584.2" cy="279.5" r="1.15" fill="#139a1c"/>
<circle cx="586.9" cy="265.1" r="1.15" fill="#139a1c"/>
<circle cx="589.8" cy="278.5" r="1.15" fill="#139a1c"/>
<circle cx="594.3" cy="256.1" r="1.15" fill="#139a1c"/>
<circle cx="595.5" cy="259.9" r="1.15" fill="#139a1c"/>
<circle cx="595.9" cy="263.0" r="1.15" fill="#139a1c"/>
<circle cx="596.9" cy="272.2" r="1.15" fill="#139a1c"/>
<circle cx="605.8" cy="263.9" r="1.15" fill="#139a1c"/>
<circle cx="608.0" cy="245.0" r="1.15" fill="#139a1c"/>
<circle cx="610.6" cy="259.4" r="1.15" fill="#139a1c"/>
<circle cx="616.9" cy="257.6" r="1.15" fill="#139a1c"/>
<circle cx="617.8" cy="237.3" r="1.15" fill="#139a1c"/>
<circle cx="622.1" cy="262.9" r="1.15" fill="#139a1c"/>
<circle cx="624.7" cy="236.6" r="1.15" fill="#139a1c"/>
<circle cx="627.7" cy="252.3" r="1.15" fill="#139a1c"/>
<circle cx="628.2" cy="240.3" r="1.15" fill="#139a1c"/>
<circle cx="628.9" cy="235.6" r="1.15" fill="#139a1c"/>
<circle cx="630.6" cy="233.8" r="1.15" fill="#139a1c"/>
<circle cx="635.5" cy="237.7" r="1.15" fill="#139a1c"/>
<circle cx="634.6" cy="249.5" r="1.15" fill="#139a1c"/>
<circle cx="637.2" cy="251.2" r="1.15" fill="#139a1c"/>
<circle cx="638.1" cy="242.0" r="1.15" fill="#139a1c"/>
<circle cx="638.1" cy="244.6" r="1.15" fill="#139a1c"/>
<circle cx="640.8" cy="239.4" r="1.15" fill="#139a1c"/>
<circle cx="641.8" cy="234.3" r="1.15" fill="#139a1c"/>
<circle cx="640.8" cy="246.8" r="1.15" fill="#139a1c"/>
<circle cx="642.5" cy="250.3" r="1.15" fill="#139a1c"/>
<circle cx="643.9" cy="251.5" r="1.15" fill="#139a1c"/>
<circle cx="645.6" cy="227.2" r="1.15" fill="#139a1c"/>
<circle cx="646.0" cy="248.6" r="1.15" fill="#139a1c"/>
<circle cx="646.8" cy="255.2" r="1.15" fill="#139a1c"/>
<circle cx="641.8" cy="272.9" r="1.15" fill="#139a1c"/>
<circle cx="647.7" cy="236.4" r="1.15" fill="#139a1c"/>
<circle cx="649.1" cy="240.0" r="1.15" fill="#139a1c"/>
<circle cx="650.8" cy="236.4" r="1.15" fill="#139a1c"/>
<circle cx="651.7" cy="240.0" r="1.15" fill="#139a1c"/>
<circle cx="652.2" cy="234.7" r="1.15" fill="#139a1c"/>
<circle cx="653.4" cy="235.2" r="1.15" fill="#139a1c"/>
<circle cx="652.9" cy="239.4" r="1.15" fill="#139a1c"/>
<circle cx="655.7" cy="232.4" r="1.15" fill="#139a1c"/>
<circle cx="656.9" cy="236.4" r="1.15" fill="#139a1c"/>
<circle cx="657.3" cy="237.3" r="1.15" fill="#139a1c"/>
<circle cx="655.2" cy="216.8" r="1.15" fill="#139a1c"/>
<circle cx="657.4" cy="224.6" r="1.15" fill="#139a1c"/>
<circle cx="659.0" cy="230.9" r="1.15" fill="#139a1c"/>
<circle cx="661.6" cy="247.0" r="1.15" fill="#139a1c"/>
<circle cx="663.9" cy="222.5" r="1.15" fill="#139a1c"/>
<circle cx="664.2" cy="236.6" r="1.15" fill="#139a1c"/>
<circle cx="665.9" cy="240.8" r="1.15" fill="#139a1c"/>
<circle cx="673.1" cy="223.8" r="1.15" fill="#139a1c"/>
<circle cx="677.7" cy="226.5" r="1.15" fill="#139a1c"/>
<circle cx="681.2" cy="219.9" r="1.15" fill="#139a1c"/>
<circle cx="682.6" cy="219.2" r="1.15" fill="#139a1c"/>
<circle cx="683.3" cy="226.5" r="1.15" fill="#139a1c"/>
<circle cx="684.3" cy="231.7" r="1.15" fill="#139a1c"/>
<circle cx="690.4" cy="210.9" r="1.15" fill="#139a1c"/>
<circle cx="690.1" cy="223.8" r="1.15" fill="#139a1c"/>
<circle cx="691.1" cy="225.1" r="1.15" fill="#139a1c"/>
<circle cx="693.7" cy="217.0" r="1.15" fill="#139a1c"/>
<circle cx="700.7" cy="256.9" r="1.15" fill="#139a1c"/>
<circle cx="701.2" cy="210.9" r="1.15" fill="#139a1c"/>
<circle cx="702.9" cy="212.6" r="1.15" fill="#139a1c"/>
<circle cx="701.7" cy="214.7" r="1.15" fill="#139a1c"/>
<circle cx="712.6" cy="205.7" r="1.15" fill="#139a1c"/>
<circle cx="714.4" cy="205.7" r="1.15" fill="#139a1c"/>
<circle cx="712.5" cy="242.8" r="1.15" fill="#139a1c"/>
<circle cx="716.8" cy="241.1" r="1.15" fill="#139a1c"/>
<circle cx="716.3" cy="220.5" r="1.15" fill="#139a1c"/>
<circle cx="718.0" cy="221.0" r="1.15" fill="#139a1c"/>
<circle cx="718.2" cy="229.1" r="1.15" fill="#139a1c"/>
<circle cx="718.7" cy="268.9" r="1.15" fill="#139a1c"/>
<circle cx="725.5" cy="203.1" r="1.15" fill="#139a1c"/>
<circle cx="727.6" cy="215.8" r="1.15" fill="#139a1c"/>
<circle cx="735.6" cy="222.2" r="1.15" fill="#139a1c"/>
<circle cx="764.5" cy="230.0" r="1.15" fill="#139a1c"/>
<circle cx="773.8" cy="215.8" r="1.15" fill="#139a1c"/>
<circle cx="506.3" cy="301.8" r="1.15" fill="#139a1c"/>
<circle cx="519.5" cy="298.7" r="1.15" fill="#139a1c"/>
<circle cx="528.7" cy="295.7" r="1.15" fill="#139a1c"/>
<circle cx="528.7" cy="304.9" r="1.15" fill="#139a1c"/>
<circle cx="540.0" cy="292.8" r="1.15" fill="#139a1c"/>
<circle cx="539.1" cy="306.8" r="1.15" fill="#139a1c"/>
<circle cx="553.8" cy="280.2" r="1.15" fill="#139a1c"/>
<circle cx="571.7" cy="284.6" r="1.15" fill="#139a1c"/>
<circle cx="583.9" cy="280.2" r="1.15" fill="#139a1c"/>
<circle cx="584.6" cy="282.5" r="1.15" fill="#139a1c"/>
<circle cx="520.3" cy="354.6" r="1.15" fill="#139a1c"/>
<circle cx="679.8" cy="283.0" r="1.15" fill="#139a1c"/>
<line x1="505.6" y1="288.1" x2="774.4" y2="199.7" stroke="#4040b8" stroke-width="0.9"/>
<text x="503.7" y="357.0" text-anchor="end" font-size="7.4" fill="#1e1e1e" font-family="Liberation Sans">0</text>
<text x="503.7" y="328.8" text-anchor="end" font-size="7.4" fill="#1e1e1e" font-family="Liberation Sans">0.2</text>
<text x="503.7" y="300.6" text-anchor="end" font-size="7.4" fill="#1e1e1e" font-family="Liberation Sans">0.4</text>
<text x="503.7" y="272.4" text-anchor="end" font-size="7.4" fill="#1e1e1e" font-family="Liberation Sans">0.6</text>
<text x="503.7" y="244.2" text-anchor="end" font-size="7.4" fill="#1e1e1e" font-family="Liberation Sans">0.8</text>
<text x="503.7" y="216.0" text-anchor="end" font-size="7.4" fill="#1e1e1e" font-family="Liberation Sans">1</text>
<text x="503.7" y="191.5" text-anchor="end" font-size="7.4" fill="#1e1e1e" font-family="Liberation Sans">1.2</text>
<text x="554.4" y="378.4" text-anchor="middle" font-size="7.4" fill="#1e1e1e" font-family="Liberation Sans">-0.4</text>
<text x="643.7" y="378.4" text-anchor="middle" font-size="7.4" fill="#1e1e1e" font-family="Liberation Sans">-0.2</text>
<text x="733.0" y="378.4" text-anchor="middle" font-size="7.4" fill="#1e1e1e" font-family="Liberation Sans">0</text>
<text x="622.6" y="388.3" text-anchor="middle" font-size="9.2" fill="#202020" font-family="Liberation Sans">Catalog R-G (mag)</text>
<text transform="translate(479.3,282) rotate(-90)" text-anchor="middle" font-size="9.2" fill="#202020" font-family="Liberation Sans">Image R-G (mag)</text>
<line x1="505.6" y1="523.5" x2="774.4" y2="523.5" stroke="#dcdcdc" stroke-width="1"/>
<line x1="505.6" y1="479.5" x2="774.4" y2="479.5" stroke="#dcdcdc" stroke-width="1"/>
<line x1="505.6" y1="435.5" x2="774.4" y2="435.5" stroke="#dcdcdc" stroke-width="1"/>
<line x1="547.5" y1="400.3" x2="547.5" y2="560" stroke="#b8b8b8" stroke-width="1"/>
<line x1="636.5" y1="400.3" x2="636.5" y2="560" stroke="#b8b8b8" stroke-width="1"/>
<line x1="725.5" y1="400.3" x2="725.5" y2="560" stroke="#b8b8b8" stroke-width="1"/>
<line x1="505.6" y1="400.3" x2="505.6" y2="560" stroke="#9c9c9c" stroke-width="1.4"/>
<line x1="584.8" y1="400.3" x2="584.8" y2="560" stroke="#5a5a5a" stroke-width="1.6"/>
<line x1="505.6" y1="473.8" x2="774.4" y2="473.8" stroke="#888888" stroke-width="1.5"/>
<circle cx="584.8" cy="473.8" r="3.6" fill="none" stroke="#383838" stroke-width="1"/>
<circle cx="505.8" cy="461.3" r="1.15" fill="#139a1c"/>
<circle cx="519.6" cy="461.4" r="1.15" fill="#139a1c"/>
<circle cx="529.2" cy="464.4" r="1.15" fill="#139a1c"/>
<circle cx="531.5" cy="455.4" r="1.15" fill="#139a1c"/>
<circle cx="533.6" cy="474.4" r="1.15" fill="#139a1c"/>
<circle cx="540.1" cy="437.5" r="1.15" fill="#139a1c"/>
<circle cx="540.1" cy="469.3" r="1.15" fill="#139a1c"/>
<circle cx="545.8" cy="474.2" r="1.15" fill="#139a1c"/>
<circle cx="546.9" cy="464.2" r="1.15" fill="#139a1c"/>
<circle cx="546.9" cy="470.8" r="1.15" fill="#139a1c"/>
<circle cx="551.1" cy="471.7" r="1.15" fill="#139a1c"/>
<circle cx="558.3" cy="468.3" r="1.15" fill="#139a1c"/>
<circle cx="560.1" cy="460.7" r="1.15" fill="#139a1c"/>
<circle cx="561.1" cy="467.2" r="1.15" fill="#139a1c"/>
<circle cx="560.7" cy="473.5" r="1.15" fill="#139a1c"/>
<circle cx="565.1" cy="469.6" r="1.15" fill="#139a1c"/>
<circle cx="567.1" cy="471.8" r="1.15" fill="#139a1c"/>
<circle cx="565.0" cy="448.9" r="1.15" fill="#139a1c"/>
<circle cx="567.4" cy="415.4" r="1.15" fill="#139a1c"/>
<circle cx="572.4" cy="444.7" r="1.15" fill="#139a1c"/>
<circle cx="574.6" cy="444.7" r="1.15" fill="#139a1c"/>
<circle cx="574.6" cy="434.2" r="1.15" fill="#139a1c"/>
<circle cx="574.2" cy="455.8" r="1.15" fill="#139a1c"/>
<circle cx="574.6" cy="455.0" r="1.15" fill="#139a1c"/>
<circle cx="573.8" cy="463.9" r="1.15" fill="#139a1c"/>
<circle cx="578.1" cy="453.2" r="1.15" fill="#139a1c"/>
<circle cx="579.6" cy="444.2" r="1.15" fill="#139a1c"/>
<circle cx="582.6" cy="465.8" r="1.15" fill="#139a1c"/>
<circle cx="593.3" cy="447.1" r="1.15" fill="#139a1c"/>
<circle cx="595.1" cy="460.7" r="1.15" fill="#139a1c"/>
<circle cx="601.7" cy="468.3" r="1.15" fill="#139a1c"/>
<circle cx="604.2" cy="467.1" r="1.15" fill="#139a1c"/>
<circle cx="617.9" cy="422.4" r="1.15" fill="#139a1c"/>
<circle cx="622.2" cy="468.2" r="1.15" fill="#139a1c"/>
<circle cx="631.9" cy="471.3" r="1.15" fill="#139a1c"/>
<circle cx="635.4" cy="445.8" r="1.15" fill="#139a1c"/>
<circle cx="639.6" cy="466.5" r="1.15" fill="#139a1c"/>
<circle cx="643.2" cy="453.0" r="1.15" fill="#139a1c"/>
<circle cx="647.0" cy="450.2" r="1.15" fill="#139a1c"/>
<circle cx="648.0" cy="472.2" r="1.15" fill="#139a1c"/>
<circle cx="660.0" cy="451.5" r="1.15" fill="#139a1c"/>
<circle cx="660.8" cy="465.6" r="1.15" fill="#139a1c"/>
<circle cx="667.4" cy="442.6" r="1.15" fill="#139a1c"/>
<circle cx="669.8" cy="449.9" r="1.15" fill="#139a1c"/>
<circle cx="673.9" cy="453.9" r="1.15" fill="#139a1c"/>
<circle cx="675.4" cy="454.8" r="1.15" fill="#139a1c"/>
<circle cx="676.4" cy="453.2" r="1.15" fill="#139a1c"/>
<circle cx="680.5" cy="471.2" r="1.15" fill="#139a1c"/>
<circle cx="687.9" cy="449.6" r="1.15" fill="#139a1c"/>
<circle cx="689.6" cy="453.9" r="1.15" fill="#139a1c"/>
<circle cx="694.0" cy="432.4" r="1.15" fill="#139a1c"/>
<circle cx="695.9" cy="433.7" r="1.15" fill="#139a1c"/>
<circle cx="720.2" cy="453.2" r="1.15" fill="#139a1c"/>
<circle cx="726.2" cy="436.3" r="1.15" fill="#139a1c"/>
<circle cx="773.8" cy="430.9" r="1.15" fill="#139a1c"/>
<circle cx="512.7" cy="487.9" r="1.15" fill="#139a1c"/>
<circle cx="518.4" cy="497.5" r="1.15" fill="#139a1c"/>
<circle cx="526.9" cy="484.0" r="1.15" fill="#139a1c"/>
<circle cx="535.1" cy="482.4" r="1.15" fill="#139a1c"/>
<circle cx="536.1" cy="514.8" r="1.15" fill="#139a1c"/>
<circle cx="543.7" cy="499.3" r="1.15" fill="#139a1c"/>
<circle cx="544.8" cy="501.3" r="1.15" fill="#139a1c"/>
<circle cx="550.3" cy="491.3" r="1.15" fill="#139a1c"/>
<circle cx="553.7" cy="504.0" r="1.15" fill="#139a1c"/>
<circle cx="554.5" cy="502.4" r="1.15" fill="#139a1c"/>
<circle cx="556.0" cy="503.0" r="1.15" fill="#139a1c"/>
<circle cx="554.5" cy="513.6" r="1.15" fill="#139a1c"/>
<circle cx="559.4" cy="494.5" r="1.15" fill="#139a1c"/>
<circle cx="559.4" cy="505.2" r="1.15" fill="#139a1c"/>
<circle cx="559.7" cy="479.3" r="1.15" fill="#139a1c"/>
<circle cx="565.7" cy="498.8" r="1.15" fill="#139a1c"/>
<circle cx="567.9" cy="498.4" r="1.15" fill="#139a1c"/>
<circle cx="565.7" cy="506.3" r="1.15" fill="#139a1c"/>
<circle cx="565.7" cy="509.6" r="1.15" fill="#139a1c"/>
<circle cx="567.2" cy="484.6" r="1.15" fill="#139a1c"/>
<circle cx="572.1" cy="489.4" r="1.15" fill="#139a1c"/>
<circle cx="575.4" cy="482.8" r="1.15" fill="#139a1c"/>
<circle cx="576.3" cy="476.9" r="1.15" fill="#139a1c"/>
<circle cx="578.1" cy="483.4" r="1.15" fill="#139a1c"/>
<circle cx="579.9" cy="484.6" r="1.15" fill="#139a1c"/>
<circle cx="580.1" cy="478.2" r="1.15" fill="#139a1c"/>
<circle cx="578.2" cy="502.2" r="1.15" fill="#139a1c"/>
<circle cx="576.6" cy="511.2" r="1.15" fill="#139a1c"/>
<circle cx="587.8" cy="485.8" r="1.15" fill="#139a1c"/>
<circle cx="586.6" cy="495.7" r="1.15" fill="#139a1c"/>
<circle cx="602.7" cy="484.0" r="1.15" fill="#139a1c"/>
<circle cx="626.7" cy="493.4" r="1.15" fill="#139a1c"/>
<circle cx="639.1" cy="478.2" r="1.15" fill="#139a1c"/>
<line x1="505.6" y1="488.5" x2="774.4" y2="438.2" stroke="#4040b8" stroke-width="0.9"/>
<text x="503.7" y="526.7" text-anchor="end" font-size="7.4" fill="#1e1e1e" font-family="Liberation Sans">0.25</text>
<text x="503.7" y="483.0" text-anchor="end" font-size="7.4" fill="#1e1e1e" font-family="Liberation Sans">0.3</text>
<text x="503.7" y="439.3" text-anchor="end" font-size="7.4" fill="#1e1e1e" font-family="Liberation Sans">0.35</text>
<text transform="translate(479.3,497.5) rotate(-90)" text-anchor="middle" font-size="9.2" fill="#202020" font-family="Liberation Sans">Image B-G (mag)</text>
</svg>
</div>
</body></html>
